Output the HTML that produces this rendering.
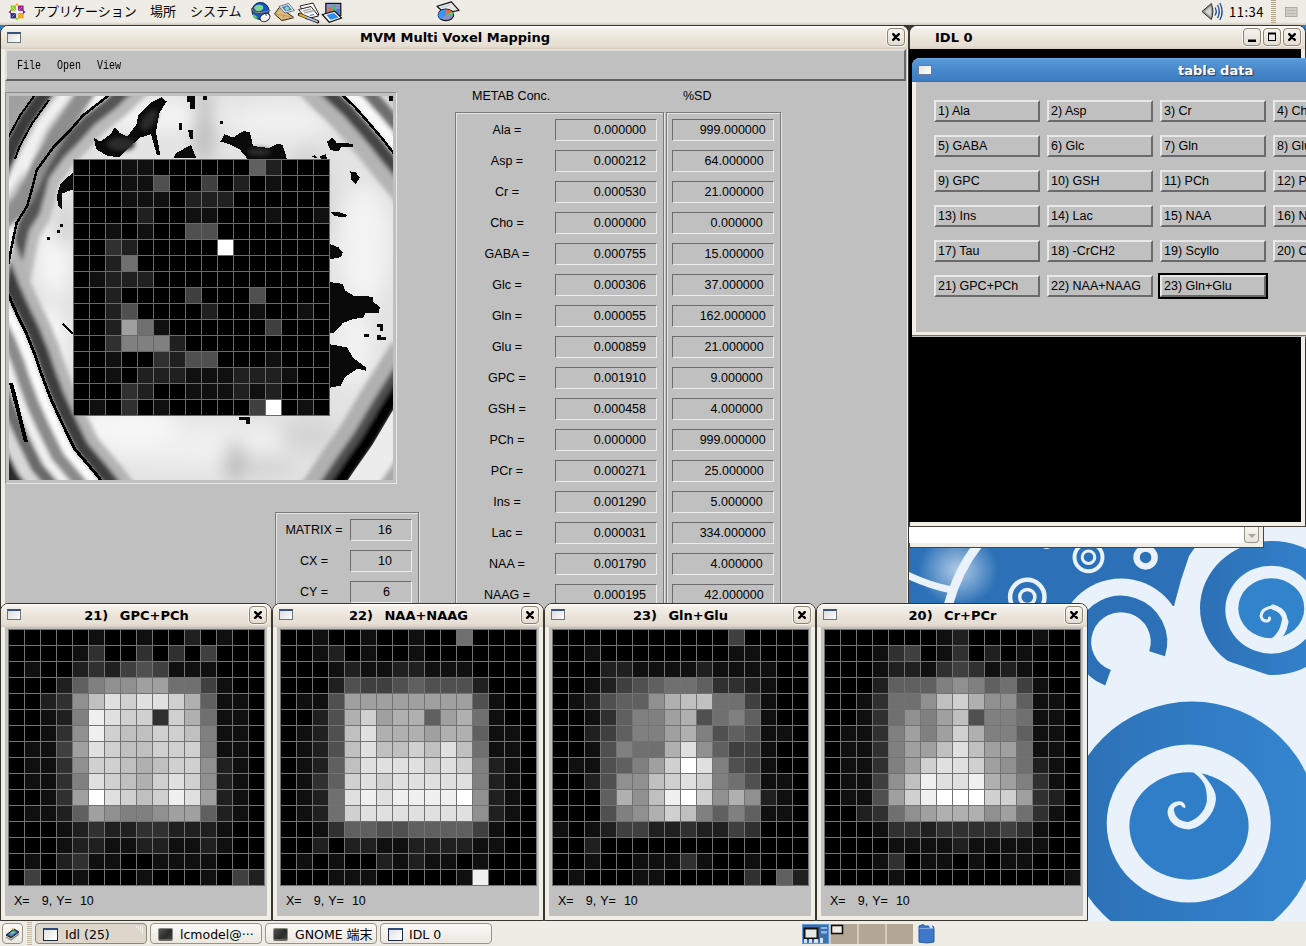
<!DOCTYPE html>
<html lang="ja"><head><meta charset="utf-8"><title>MVM Multi Voxel Mapping</title>
<style>
html,body{margin:0;padding:0;background:#2f7dc4}
body{width:1306px;height:946px;overflow:hidden}
#screen{position:relative;width:1306px;height:946px;overflow:hidden;background:#2e7cc4;font-family:"Liberation Sans","Noto Sans CJK JP",sans-serif}
.abs{position:absolute;box-sizing:border-box}
svg.abs{display:block}
.win{background:#f1eee8;border:1px solid #3a3630}
.tbar{background:linear-gradient(#ffffff 0,#f3f0ea 12%,#e9e2d8 60%,#e6dfd4 85%,#d9cfbf 100%)}
.ttl{font-family:"DejaVu Sans","Noto Sans CJK JP",sans-serif;font-weight:bold;font-size:13px;color:#000;white-space:nowrap}
.wbtn{width:18px;height:18px;border:1px solid #8d846f;border-radius:4px;background:linear-gradient(#f6f3ee,#e4ddd2);box-shadow:0 0 0 1px rgba(255,255,255,.7)}
.wbtn svg{position:absolute;left:-1px;top:-1px}
.wicon{width:14px;height:11px;border:1px solid #6f747c;border-top:2px solid #35517c;background:linear-gradient(135deg,#dcdcdc,#ffffff)}
.menu{font-family:"Liberation Mono",monospace;font-size:13px;line-height:14px;transform:scaleX(.77);transform-origin:0 0;color:#000}
.mt{font-size:12.5px;line-height:22px;color:#000;white-space:nowrap}
.lab{text-align:center}
.fld{height:22px;border:1px solid;border-color:#6c6c6c #ececec #ececec #6c6c6c;font-size:12.5px;line-height:20px}
.fld span{position:absolute;top:0;white-space:nowrap}
.etch{border:1px solid #7a7a7a;box-shadow:1px 1px 0 #e4e4e4, inset 1px 1px 0 #e4e4e4}
.mbtn{width:106px;height:22px;background:#c0c0c0;border:2px solid;border-color:#e8e8e8 #6a6a6a #6a6a6a #e8e8e8;font-size:12.5px;line-height:19px;padding-left:2px;white-space:nowrap;overflow:hidden}
.ptxt{font-family:"DejaVu Sans","Noto Sans CJK JP",sans-serif;font-size:13px;color:#000;white-space:nowrap}
.task{top:923px;width:112px;height:21px;border:1px solid #9b9485;border-radius:4px;background:linear-gradient(#fbfaf8,#ebe7df);font-family:"DejaVu Sans","Noto Sans CJK JP",sans-serif;font-size:12px;line-height:22px;white-space:nowrap;overflow:hidden}
.task{font-size:12.5px}
.task i.wi{position:absolute;left:7px;top:4px;width:15px;height:13px;box-sizing:border-box;border:1.500px solid #1d2a44;border-top:2px solid #2f4d7a;background:linear-gradient(135deg,#e2e2e2,#fff)}
.task i.ti{position:absolute;left:7px;top:4px;width:15px;height:13px;box-sizing:border-box;border:1px solid #8a8a80;border-bottom:2px solid #6a6a62;border-radius:2px;background:linear-gradient(135deg,#555 0,#2b2b2b 60%,#444 100%)}

</style></head>
<body>
<div id="screen">
<svg class="abs" style="left:909px;top:520px" width="397" height="402" viewBox="909 520 397 402">
<defs><radialGradient id="glow" cx="0.500" cy="0.500" r="0.500"><stop offset="0" stop-color="#dfeaf6" stop-opacity=".75"/><stop offset="1" stop-color="#dfeaf6" stop-opacity="0"/></radialGradient>
<linearGradient id="bl" x1="0" x2="1" y1="0" y2="0"><stop offset="0" stop-color="#2c70b6"/><stop offset="1" stop-color="#3586d0"/></linearGradient></defs>
<rect x="909" y="520" width="397" height="402" fill="#e9f1fa"/>
<path d="M909 540H1200L1189 556L1181 580L1174 606L1150 606L1088 640L909 640Z" fill="#2c71b7"/>
<ellipse cx="958" cy="570" rx="40" ry="36" fill="url(#glow)"/>
<path d="M978 545Q958 570 948 606" stroke="#e9f1fa" stroke-width="9" fill="none"/>
<path d="M905 574Q930 586 952 590" stroke="#e9f1fa" stroke-width="7" fill="none"/>
<circle cx="1046.500" cy="542" r="7" fill="#e9f1fa"/>
<circle cx="1088.500" cy="557.200" r="14" fill="none" stroke="#e9f1fa" stroke-width="4"/>
<circle cx="1088.500" cy="557.200" r="6.300" fill="none" stroke="#e9f1fa" stroke-width="3"/>
<circle cx="1145.600" cy="557.400" r="9" fill="none" stroke="#e9f1fa" stroke-width="6.500"/>
<circle cx="1027.300" cy="597" r="17.200" fill="none" stroke="#e9f1fa" stroke-width="4.500"/>
<circle cx="1027.300" cy="597" r="7.600" fill="none" stroke="#e9f1fa" stroke-width="3.500"/>
<circle cx="1121" cy="641" r="62.500" fill="#e9f1fa"/>
<path d="M1108 677.700A38 38 0 1 1 1157.100 653.700" stroke="#2c71b7" stroke-width="16.500" fill="none"/>
<ellipse cx="1272" cy="608" rx="72" ry="67" fill="url(#bl)"/>
<path d="M1196 640L1220.700 658.400L1275.800 677.700L1310 671L1310 700L1190 700Z" fill="#e9f1fa"/>
<ellipse cx="1271.300" cy="609.700" rx="46" ry="44" fill="#e9f1fa"/>
<ellipse cx="1271.300" cy="608.300" rx="33" ry="30" fill="#3183cc"/>
<g fill="none" stroke="#e9f1fa" stroke-linecap="round"><path d="M1274 641Q1283 634 1285 622" stroke-width="7"/><path d="M1285 623Q1286 611 1273 607" stroke-width="5"/><path d="M1273 607Q1262 608 1261 616Q1262 621.500 1267.500 621Q1270 620 1269.500 618" stroke-width="3"/></g>
<ellipse cx="1192" cy="826" rx="126" ry="124.500" fill="url(#bl)"/>
<ellipse cx="1188.700" cy="823.500" rx="82" ry="79" fill="#e9f1fa"/>
<ellipse cx="1189" cy="826" rx="59.600" ry="53.700" fill="#2f7ec7"/>
<path d="M1188 769L1191.600 766Q1204 773 1212 786.400Q1217 794 1215.700 801.600Q1214 812 1206.800 819.400Q1199 828 1189 829.500Q1180 829 1173.900 824.500Q1167.500 819 1167.500 811.800Q1168 806 1172.600 802.900Q1177 800.500 1181.500 801.600Q1186 804 1185.300 808L1182.700 807.200Q1181 804 1177.700 805.400Q1173.500 807 1173.900 810.500Q1174.500 815 1177.700 818.100Q1182 822 1187.800 821.900Q1194 820.500 1199.200 815.600Q1205.500 809 1206.800 801.600Q1207.500 792 1204.300 783.900Q1199 775 1188 769Z" fill="#e9f1fa"/>
</svg>
<div class="abs" style="left:900px;top:25px;width:20px;height:12px;background:#3a3630"></div>
<div class="abs win" style="left:909px;top:25px;width:397px;height:502px;border-radius:8px 8px 0 0"></div>
<div class="abs tbar" style="left:910px;top:26px;width:395px;height:23px;border-radius:7px 7px 0 0"></div>
<div class="abs ttl" style="left:935px;top:26px;height:23px;line-height:23px">IDL 0</div>
<div class="abs wbtn" style="left:1243px;top:28px"><svg width="18" height="18"><rect x="5" y="11.500" width="8" height="2.500" fill="#000"/></svg></div>
<div class="abs wbtn" style="left:1263px;top:28px"><svg width="18" height="18"><rect x="5.500" y="5.500" width="7" height="7" fill="none" stroke="#000" stroke-width="1"/><rect x="5" y="4.500" width="8" height="2" fill="#000"/></svg></div>
<div class="abs wbtn" style="left:1283px;top:28px"><svg width="18" height="18"><path d="M6.200 6.200l5.600 5.600M11.800 6.200l-5.600 5.600" stroke="#000" stroke-width="2.400" stroke-linecap="round"/></svg></div>
<div class="abs" style="left:909px;top:49px;width:392px;height:473px;background:#000"></div>
<div class="abs" style="left:909px;top:527px;width:355px;height:21px;background:#f1eee8;border:1px solid #4a453c;border-top:none"></div>
<div class="abs" style="left:909px;top:526px;width:397px;height:1px;background:#4a453c"></div>
<div class="abs" style="left:909px;top:527px;width:335px;height:16px;background:#fff"></div>
<div class="abs" style="left:1244px;top:527px;width:15px;height:16px;border:1px solid #9a9588;border-top:none;border-radius:0 0 4px 4px;background:linear-gradient(#f7f5f1,#e9e5dd)"><svg width="13" height="16" style="position:absolute;left:0;top:0"><path d="M3 7h8l-4 4z" fill="#aaa69c"/></svg></div>
<div class="abs" style="left:912px;top:58px;width:394px;height:279px;background:#c0c0c0;border-radius:8px 0 0 0"></div>
<div class="abs" style="left:912px;top:58px;width:394px;height:24px;border-radius:8px 0 0 0;background:linear-gradient(#6aa5df 0,#5596d6 12%,#4687cb 55%,#3f7ec2 90%,#3a72b0 100%)"></div>
<div class="abs" style="left:912px;top:82px;width:4px;height:254px;background:#f1eee8"></div>
<div class="abs" style="left:912px;top:332px;width:394px;height:4px;background:#f1eee8;border-bottom:1px solid #77736a"></div>
<div class="abs" style="left:918px;top:65px;width:14px;height:10px;border:1px solid #6d7d96;background:linear-gradient(135deg,#e4e4e4,#fff)"></div>
<div class="abs ttl" style="left:1178px;top:59px;height:23px;line-height:23px;color:#fff;text-shadow:1px 1px 1px #1c3a63">table data</div>
<div class="abs mbtn" style="left:934px;top:100px">1) Ala</div><div class="abs mbtn" style="left:1047px;top:100px">2) Asp</div><div class="abs mbtn" style="left:1160px;top:100px">3) Cr</div><div class="abs mbtn" style="left:1273px;top:100px">4) Cho</div><div class="abs mbtn" style="left:934px;top:135px">5) GABA</div><div class="abs mbtn" style="left:1047px;top:135px">6) Glc</div><div class="abs mbtn" style="left:1160px;top:135px">7) Gln</div><div class="abs mbtn" style="left:1273px;top:135px">8) Glu</div><div class="abs mbtn" style="left:934px;top:170px">9) GPC</div><div class="abs mbtn" style="left:1047px;top:170px">10) GSH</div><div class="abs mbtn" style="left:1160px;top:170px">11) PCh</div><div class="abs mbtn" style="left:1273px;top:170px">12) PCr</div><div class="abs mbtn" style="left:934px;top:205px">13) Ins</div><div class="abs mbtn" style="left:1047px;top:205px">14) Lac</div><div class="abs mbtn" style="left:1160px;top:205px">15) NAA</div><div class="abs mbtn" style="left:1273px;top:205px">16) NAAG</div><div class="abs mbtn" style="left:934px;top:240px">17) Tau</div><div class="abs mbtn" style="left:1047px;top:240px">18) -CrCH2</div><div class="abs mbtn" style="left:1160px;top:240px">19) Scyllo</div><div class="abs mbtn" style="left:1273px;top:240px">20) Cr+PCr</div><div class="abs mbtn" style="left:934px;top:275px">21) GPC+PCh</div><div class="abs mbtn" style="left:1047px;top:275px">22) NAA+NAAG</div><div class="abs" style="left:1158px;top:273px;width:110px;height:26px;background:#000"></div><div class="abs mbtn" style="left:1160px;top:275px">23) Gln+Glu</div>
<div class="abs win" style="left:0;top:25px;width:909px;height:620px;border-radius:8px 8px 0 0"></div>
<div class="abs tbar" style="left:1px;top:26px;width:907px;height:23px;border-radius:7px 7px 0 0"></div>
<div class="abs wicon" style="left:7px;top:32px"></div>
<div class="abs ttl" style="left:360px;top:26px;height:23px;line-height:23px">MVM Multi Voxel Mapping</div>
<div class="abs wbtn" style="left:887px;top:28px"><svg width="18" height="18"><path d="M6.200 6.200l5.600 5.600M11.800 6.200l-5.600 5.600" stroke="#000" stroke-width="2.400" stroke-linecap="round"/></svg></div>
<div class="abs" style="left:5px;top:49px;width:902px;height:596px;background:#c0c0c0"></div>
<div class="abs" style="left:5px;top:49px;width:901px;height:32px;background:#c0c0c0;border:2px solid;border-color:#dedede #6a6a6a #606060 #dedede"></div>
<div class="abs menu" style="left:17px;top:59px">File</div>
<div class="abs menu" style="left:57px;top:59px">Open</div>
<div class="abs menu" style="left:97px;top:59px">View</div>
<div class="abs" style="left:5px;top:92px;width:392px;height:392px;border:1px solid;border-color:#8a8a8a #e6e6e6 #e6e6e6 #8a8a8a"></div>
<svg class="abs" style="left:9px;top:96px" width="384" height="384" viewBox="0 0 384 384">
<defs><filter id="b2" x="-20%" y="-20%" width="140%" height="140%"><feGaussianBlur stdDeviation="2.2"/></filter><filter id="b5" x="-20%" y="-20%" width="140%" height="140%"><feGaussianBlur stdDeviation="5"/></filter><filter id="b9" x="-30%" y="-30%" width="160%" height="160%"><feGaussianBlur stdDeviation="9"/></filter></defs>
<rect width="384" height="384" fill="#e3e3e3"/>
<g filter="url(#b9)">
<ellipse cx="150" cy="20" rx="70" ry="14" fill="#f4f4f4"/>
<ellipse cx="270" cy="25" rx="50" ry="18" fill="#f0f0f0"/>
<ellipse cx="300" cy="110" rx="22" ry="60" fill="#d2d2d2"/>
<ellipse cx="355" cy="150" rx="25" ry="60" fill="#f3f3f3"/>
<ellipse cx="45" cy="160" rx="16" ry="40" fill="#f6f6f6"/>
<ellipse cx="40" cy="250" rx="14" ry="40" fill="#fafafa"/>
<ellipse cx="200" cy="350" rx="120" ry="22" fill="#efefef"/>
<ellipse cx="120" cy="330" rx="50" ry="20" fill="#f6f6f6"/>
<ellipse cx="300" cy="340" rx="30" ry="20" fill="#d6d6d6"/>
<ellipse cx="345" cy="250" rx="18" ry="40" fill="#f2f2f2"/>
<ellipse cx="250" cy="370" rx="40" ry="12" fill="#d4d4d4"/>
<ellipse cx="195" cy="30" rx="7" ry="40" fill="#a8a8a8"/>
<ellipse cx="226" cy="365" rx="5" ry="22" fill="#9a9a9a"/>
<ellipse cx="55" cy="130" rx="10" ry="20" fill="#cfcfcf"/>
</g>
<polygon points="-50,-50 140,-40 96.4,2 74.2,19.3 59.4,36.2 44.6,51 27.7,74.2 23.5,91 18.2,110 7.6,127 2.3,152 -2,175 -8,215 -20,150 -2,196 8.7,219.7 17,236.6 25.6,257.8 32,276.8 41.5,302 51,323 65.8,353 87,378 120,420 -50,420" fill="#c4c4c4"/>
<g filter="url(#b2)" fill="none" stroke-linejoin="round">
<path d="M151 -31 L107.4 11 L85.2 28.3 L70.4 45.2 L55.6 60 L38.7 83.2 L34.5 100 L29.2 119 L18.6 136 L13.3 161 L9 184 L3 224" stroke="#bababa" stroke-width="25"/>
<path d="M146 -35 L102.4 7 L80.2 24.3 L65.4 41.2 L50.6 56 L33.7 79.2 L29.5 96 L24.2 115 L13.6 132 L8.3 157 L4 180 L-2 220" stroke="#555555" stroke-width="14"/>
<path d="M-7 146 L11 192 L21.7 215.7 L30 232.6 L38.6 253.8 L45 272.8 L54.5 298 L64 319 L78.8 349 L100 374 L133 416" stroke="#b4b4b4" stroke-width="24"/>
<path d="M-13 148 L5 194 L15.7 217.7 L24 234.6 L32.6 255.8 L39 274.8 L48.5 300 L58 321 L72.8 351 L94 376 L127 418" stroke="#3c3c3c" stroke-width="14"/>
<path d="M135 -44 L91.4 -2 L69.2 15.3 L54.4 32.2 L39.6 47 L22.7 70.2 L18.5 87 L13.2 106 L2.6 123 L-2.7 148 L-7 171 L-13 211" stroke="#fbfbfb" stroke-width="12"/>
<path d="M92 -24 L74 2 L49 38 L32 66 L15 102 L2 118 L-10 130" stroke="#8e8e8e" stroke-width="17"/>
<path d="M72 -24 L55 0 L34 27.7 L17 59 L4.5 80.5 L-6 98" stroke="#f0f0f0" stroke-width="11"/>
<path d="M35 -35.5 L18 -12 L1 11.5 L-11.5 34.7 L-16 47 L-24 68" stroke="#a0a0a0" stroke-width="22"/>
<path d="M51 -23.5 L34 0 L17 23.5 L4.5 46.7 L0 59 L-8 80" stroke="#3a3a3a" stroke-width="14"/>
<path d="M-26 153 L-8 199 L2.7 222.7 L11 239.6 L19.6 260.8 L26 279.8 L35.5 305 L45 326 L59.8 356 L81 381 L114 423" stroke="#fcfcfc" stroke-width="10"/>
<path d="M-37 158 L-19 204 L-8.3 227.7 L0 244.6 L8.6 265.8 L15 284.8 L24.5 310 L34 331 L48.8 361 L70 386 L103 428" stroke="#8a8a8a" stroke-width="13"/>
<path d="M-47 163 L-29 209 L-18.3 232.7 L-10 249.6 L-1.4 270.8 L5 289.8 L14.5 315 L24 336 L38.8 366 L60 391 L93 433" stroke="#f0f0f0" stroke-width="9"/>
<path d="M-58 168 L-40 214 L-29.3 237.7 L-21 254.6 L-12.4 275.8 L-6 294.8 L3.5 320 L13 341 L27.8 371 L49 396 L82 438" stroke="#6a6a6a" stroke-width="12"/>
<path d="M-70 174 L-52 220 L-41.3 243.7 L-33 260.6 L-24.4 281.8 L-18 300.8 L-8.5 326 L1 347 L15.8 377 L37 402 L70 444" stroke="#d8d8d8" stroke-width="12"/>
<path d="M-84 180 L-66 226 L-55.3 249.7 L-47 266.6 L-38.4 287.8 L-32 306.8 L-22.5 332 L-13 353 L1.8 383 L23 408 L56 450" stroke="#2a2a2a" stroke-width="18"/>
</g>
<polygon points="295,-40 330,-4 345,10 360,27 372,41 384.6,57 420,100 420,-40" fill="#e6e6e6"/>
<g filter="url(#b2)" fill="none">
<path d="M282 -29 L317 7 L332 21 L347 38 L359 52 L371.6 68 L407 111" stroke="#b4b4b4" stroke-width="26"/>
<path d="M289 -35 L324 1 L339 15 L354 32 L366 46 L378.6 62 L414 105" stroke="#444444" stroke-width="13"/>
<path d="M300 -44 L335 -8 L350 6 L365 23 L377 37 L389.6 53 L425 96" stroke="#fafafa" stroke-width="9"/>
<path d="M310 -53 L345 -17 L360 -3 L375 14 L387 28 L399.6 44 L435 87" stroke="#6e6e6e" stroke-width="13"/>
<path d="M322 -64 L357 -28 L372 -14 L387 3 L399 17 L411.6 33 L447 76" stroke="#c8c8c8" stroke-width="12"/>
</g>
<polygon points="415,265 383.6,314.8 363.5,348.7 344.4,376 315,420 420,420" fill="#ececec"/>
<g filter="url(#b2)" fill="none">
<path d="M394 253 L362.6 302.8 L342.5 336.7 L323.4 364 L294 408" stroke="#b0b0b0" stroke-width="26"/>
<path d="M403 258 L371.6 307.8 L351.5 341.7 L332.4 369 L303 413" stroke="#505050" stroke-width="16"/>
<path d="M410 262 L378.6 311.8 L358.5 345.7 L339.4 373 L310 417" stroke="#000000" stroke-width="14"/>
</g>
<polygon points="415,265 383.6,314.8 363.5,348.7 344.4,376 315,420 420,420" fill="#ececec"/>
<path d="M445 283 L413.6 332.8 L393.5 366.7 L374.4 394 L345 438" stroke="#a8a8a8" stroke-width="14" fill="none" filter="url(#b2)"/>
<g fill="none" stroke="#000" shape-rendering="crispEdges">
<path d="M140 -40 L96.4 2 L74.2 19.3 L59.4 36.2 L44.6 51 L27.7 74.2 L23.5 91 L18.2 110 L7.6 127 L2.3 152 L-2 175 L-8 215" stroke-width="2.500"/>
<path d="M-20 150 L-2 196 L8.7 219.7 L17 236.6 L25.6 257.8 L32 276.8 L41.5 302 L51 323 L65.8 353 L87 378 L120 420" stroke-width="3"/>
<path d="M295 -40 L330 -4 L345 10 L360 27 L372 41 L384.6 57 L420 100" stroke-width="2.500"/>
<path d="M28 -4 L11 19.5 L-1.5 42.7 L-6 55" stroke-width="2"/>
<path d="M40 4 L23 27.5 L10.5 50.7 L6 63" stroke-width="2"/>
<path d="M2 287 L8 310 L17 346" stroke-width="4"/>
<path d="M54 228 L63.6 237.7" stroke-width="2.500"/>
</g>
<g fill="#0a0a0a" shape-rendering="crispEdges">
<polygon points="84.8,41.5 91,45.7 101.7,38.3 106,30.9 111,37.2 118.6,40.4 128,27.7 129,19.3 142,6.6 152.4,1.3 157.7,5.5 150.3,17 147,36 151.4,59.4 148,59.4 142,38.3 131.3,41.5 122.8,48.9 110,61.5 97.5,59.4 87,53"/>
<polygon points="167,57 182,49 187,61.5 165,61.5"/>
<polygon points="178,0 186,0 186,13 181,13 181,6 178,6"/>
<polygon points="170,27 173,27 173,34 170,34"/>
<polygon points="179,34 184,34 184,43 181,43"/>
<polygon points="63.6,77.4 65,77 65,93 53,97.5 53,114 49,110 48,99.6 51,89 59.4,80.5"/>
<polygon points="51,128 54,128 54,131 51,131"/>
<polygon points="48,134 51,134 51,137 48,137"/>
<polygon points="38,141 41,141 41,144 38,144"/>
<polygon points="211.3,45.7 215.5,38.3 224,41.5 234.5,35 240.9,36.2 244,50 260,52 268.3,47.8 273.6,48.9 277.9,63 238.7,63 230.3,53 219.7,47.8"/>
<polygon points="318,45.7 323.3,41.5 327.5,46.7 344.4,47.8 344.4,50.5 331.8,51.4 329.6,55.2 321.2,54.1"/>
<polygon points="302,61 306,59 308,62"/>
<polygon points="311,60 317,58 318,63 312,63"/>
<polygon points="341.3,75.3 346.6,76.3 350.8,81.6 346.6,88 342.3,83.7"/>
<polygon points="321.2,115.5 331,116.5 338,119 336,121.5 325,120"/>
<polygon points="321.2,148.2 329.6,151.4 333.9,156.7 331.8,161 323.3,163 321,163"/>
<polygon points="211,25 214,25 214,28 211,28"/>
<polygon points="194,0 198,0 198,4 194,4"/>
<polygon points="321.2,186 333.9,188 336,194.3 344.4,199.6 363.5,200.7 363.5,205 370.9,211.3 369.8,216.5 357,216.5 354,221.8 344.4,222.9 333.9,227 325.4,236.6 321.2,236.6"/>
<polygon points="367.7,228 374,228 374,234.5 371,234.5 371,231 367.7,231"/>
<polygon points="355,237.7 360,237.7 360,241 355,241"/>
<polygon points="367.7,238.7 372,238.7 372,241 377,241 377,244 367.7,244"/>
<polygon points="321.2,248.3 338,251.4 344.4,262 357,271.5 357,274.7 348.7,272.6 336,281 331.8,289.5 321.2,291.6"/>
<polygon points="230.3,321.2 240.9,321.2 240.9,327.5 237,327.5 237,324 230.3,324"/>
<polygon points="380,0 384,0 384,5 380,5"/>
</g>
<g fill="#2c2c2c" filter="url(#b2)"><ellipse cx="112" cy="48" rx="14" ry="7"/><ellipse cx="140" cy="24" rx="6" ry="12" transform="rotate(35 140 24)"/><ellipse cx="250" cy="56" rx="12" ry="4"/></g>
</svg><svg class="abs " style="left:73px;top:159px" width="257" height="257" viewBox="0 0 257 257" shape-rendering="crispEdges"><rect width="257" height="257" fill="#6a6a6a"/><rect x="1" y="1" width="15" height="15" fill="#000000"/><rect x="17" y="1" width="15" height="15" fill="#000000"/><rect x="33" y="1" width="15" height="15" fill="#000000"/><rect x="49" y="1" width="15" height="15" fill="#101010"/><rect x="65" y="1" width="15" height="15" fill="#101010"/><rect x="81" y="1" width="15" height="15" fill="#000000"/><rect x="97" y="1" width="15" height="15" fill="#000000"/><rect x="113" y="1" width="15" height="15" fill="#000000"/><rect x="129" y="1" width="15" height="15" fill="#000000"/><rect x="145" y="1" width="15" height="15" fill="#000000"/><rect x="161" y="1" width="15" height="15" fill="#000000"/><rect x="177" y="1" width="15" height="15" fill="#606060"/><rect x="193" y="1" width="15" height="15" fill="#202020"/><rect x="209" y="1" width="15" height="15" fill="#000000"/><rect x="225" y="1" width="15" height="15" fill="#000000"/><rect x="241" y="1" width="15" height="15" fill="#000000"/><rect x="1" y="17" width="15" height="15" fill="#000000"/><rect x="17" y="17" width="15" height="15" fill="#000000"/><rect x="33" y="17" width="15" height="15" fill="#000000"/><rect x="49" y="17" width="15" height="15" fill="#101010"/><rect x="65" y="17" width="15" height="15" fill="#101010"/><rect x="81" y="17" width="15" height="15" fill="#505050"/><rect x="97" y="17" width="15" height="15" fill="#000000"/><rect x="113" y="17" width="15" height="15" fill="#000000"/><rect x="129" y="17" width="15" height="15" fill="#404040"/><rect x="145" y="17" width="15" height="15" fill="#000000"/><rect x="161" y="17" width="15" height="15" fill="#202020"/><rect x="177" y="17" width="15" height="15" fill="#000000"/><rect x="193" y="17" width="15" height="15" fill="#101010"/><rect x="209" y="17" width="15" height="15" fill="#000000"/><rect x="225" y="17" width="15" height="15" fill="#000000"/><rect x="241" y="17" width="15" height="15" fill="#000000"/><rect x="1" y="33" width="15" height="15" fill="#000000"/><rect x="17" y="33" width="15" height="15" fill="#000000"/><rect x="33" y="33" width="15" height="15" fill="#000000"/><rect x="49" y="33" width="15" height="15" fill="#101010"/><rect x="65" y="33" width="15" height="15" fill="#101010"/><rect x="81" y="33" width="15" height="15" fill="#101010"/><rect x="97" y="33" width="15" height="15" fill="#000000"/><rect x="113" y="33" width="15" height="15" fill="#202020"/><rect x="129" y="33" width="15" height="15" fill="#202020"/><rect x="145" y="33" width="15" height="15" fill="#202020"/><rect x="161" y="33" width="15" height="15" fill="#000000"/><rect x="177" y="33" width="15" height="15" fill="#000000"/><rect x="193" y="33" width="15" height="15" fill="#000000"/><rect x="209" y="33" width="15" height="15" fill="#000000"/><rect x="225" y="33" width="15" height="15" fill="#000000"/><rect x="241" y="33" width="15" height="15" fill="#000000"/><rect x="1" y="49" width="15" height="15" fill="#000000"/><rect x="17" y="49" width="15" height="15" fill="#000000"/><rect x="33" y="49" width="15" height="15" fill="#000000"/><rect x="49" y="49" width="15" height="15" fill="#000000"/><rect x="65" y="49" width="15" height="15" fill="#202020"/><rect x="81" y="49" width="15" height="15" fill="#000000"/><rect x="97" y="49" width="15" height="15" fill="#000000"/><rect x="113" y="49" width="15" height="15" fill="#101010"/><rect x="129" y="49" width="15" height="15" fill="#101010"/><rect x="145" y="49" width="15" height="15" fill="#000000"/><rect x="161" y="49" width="15" height="15" fill="#000000"/><rect x="177" y="49" width="15" height="15" fill="#000000"/><rect x="193" y="49" width="15" height="15" fill="#101010"/><rect x="209" y="49" width="15" height="15" fill="#000000"/><rect x="225" y="49" width="15" height="15" fill="#000000"/><rect x="241" y="49" width="15" height="15" fill="#101010"/><rect x="1" y="65" width="15" height="15" fill="#000000"/><rect x="17" y="65" width="15" height="15" fill="#000000"/><rect x="33" y="65" width="15" height="15" fill="#101010"/><rect x="49" y="65" width="15" height="15" fill="#000000"/><rect x="65" y="65" width="15" height="15" fill="#101010"/><rect x="81" y="65" width="15" height="15" fill="#000000"/><rect x="97" y="65" width="15" height="15" fill="#000000"/><rect x="113" y="65" width="15" height="15" fill="#505050"/><rect x="129" y="65" width="15" height="15" fill="#505050"/><rect x="145" y="65" width="15" height="15" fill="#000000"/><rect x="161" y="65" width="15" height="15" fill="#000000"/><rect x="177" y="65" width="15" height="15" fill="#000000"/><rect x="193" y="65" width="15" height="15" fill="#000000"/><rect x="209" y="65" width="15" height="15" fill="#000000"/><rect x="225" y="65" width="15" height="15" fill="#000000"/><rect x="241" y="65" width="15" height="15" fill="#000000"/><rect x="1" y="81" width="15" height="15" fill="#000000"/><rect x="17" y="81" width="15" height="15" fill="#000000"/><rect x="33" y="81" width="15" height="15" fill="#303030"/><rect x="49" y="81" width="15" height="15" fill="#202020"/><rect x="65" y="81" width="15" height="15" fill="#000000"/><rect x="81" y="81" width="15" height="15" fill="#000000"/><rect x="97" y="81" width="15" height="15" fill="#000000"/><rect x="113" y="81" width="15" height="15" fill="#000000"/><rect x="129" y="81" width="15" height="15" fill="#000000"/><rect x="145" y="81" width="15" height="15" fill="#ffffff"/><rect x="161" y="81" width="15" height="15" fill="#000000"/><rect x="177" y="81" width="15" height="15" fill="#000000"/><rect x="193" y="81" width="15" height="15" fill="#000000"/><rect x="209" y="81" width="15" height="15" fill="#000000"/><rect x="225" y="81" width="15" height="15" fill="#000000"/><rect x="241" y="81" width="15" height="15" fill="#000000"/><rect x="1" y="97" width="15" height="15" fill="#000000"/><rect x="17" y="97" width="15" height="15" fill="#000000"/><rect x="33" y="97" width="15" height="15" fill="#202020"/><rect x="49" y="97" width="15" height="15" fill="#707070"/><rect x="65" y="97" width="15" height="15" fill="#000000"/><rect x="81" y="97" width="15" height="15" fill="#000000"/><rect x="97" y="97" width="15" height="15" fill="#000000"/><rect x="113" y="97" width="15" height="15" fill="#000000"/><rect x="129" y="97" width="15" height="15" fill="#000000"/><rect x="145" y="97" width="15" height="15" fill="#000000"/><rect x="161" y="97" width="15" height="15" fill="#000000"/><rect x="177" y="97" width="15" height="15" fill="#000000"/><rect x="193" y="97" width="15" height="15" fill="#000000"/><rect x="209" y="97" width="15" height="15" fill="#000000"/><rect x="225" y="97" width="15" height="15" fill="#000000"/><rect x="241" y="97" width="15" height="15" fill="#000000"/><rect x="1" y="113" width="15" height="15" fill="#000000"/><rect x="17" y="113" width="15" height="15" fill="#101010"/><rect x="33" y="113" width="15" height="15" fill="#202020"/><rect x="49" y="113" width="15" height="15" fill="#202020"/><rect x="65" y="113" width="15" height="15" fill="#202020"/><rect x="81" y="113" width="15" height="15" fill="#000000"/><rect x="97" y="113" width="15" height="15" fill="#000000"/><rect x="113" y="113" width="15" height="15" fill="#000000"/><rect x="129" y="113" width="15" height="15" fill="#000000"/><rect x="145" y="113" width="15" height="15" fill="#000000"/><rect x="161" y="113" width="15" height="15" fill="#000000"/><rect x="177" y="113" width="15" height="15" fill="#000000"/><rect x="193" y="113" width="15" height="15" fill="#000000"/><rect x="209" y="113" width="15" height="15" fill="#000000"/><rect x="225" y="113" width="15" height="15" fill="#000000"/><rect x="241" y="113" width="15" height="15" fill="#000000"/><rect x="1" y="129" width="15" height="15" fill="#000000"/><rect x="17" y="129" width="15" height="15" fill="#000000"/><rect x="33" y="129" width="15" height="15" fill="#202020"/><rect x="49" y="129" width="15" height="15" fill="#000000"/><rect x="65" y="129" width="15" height="15" fill="#000000"/><rect x="81" y="129" width="15" height="15" fill="#000000"/><rect x="97" y="129" width="15" height="15" fill="#000000"/><rect x="113" y="129" width="15" height="15" fill="#404040"/><rect x="129" y="129" width="15" height="15" fill="#000000"/><rect x="145" y="129" width="15" height="15" fill="#000000"/><rect x="161" y="129" width="15" height="15" fill="#000000"/><rect x="177" y="129" width="15" height="15" fill="#505050"/><rect x="193" y="129" width="15" height="15" fill="#000000"/><rect x="209" y="129" width="15" height="15" fill="#000000"/><rect x="225" y="129" width="15" height="15" fill="#000000"/><rect x="241" y="129" width="15" height="15" fill="#000000"/><rect x="1" y="145" width="15" height="15" fill="#000000"/><rect x="17" y="145" width="15" height="15" fill="#000000"/><rect x="33" y="145" width="15" height="15" fill="#202020"/><rect x="49" y="145" width="15" height="15" fill="#505050"/><rect x="65" y="145" width="15" height="15" fill="#000000"/><rect x="81" y="145" width="15" height="15" fill="#000000"/><rect x="97" y="145" width="15" height="15" fill="#000000"/><rect x="113" y="145" width="15" height="15" fill="#000000"/><rect x="129" y="145" width="15" height="15" fill="#202020"/><rect x="145" y="145" width="15" height="15" fill="#000000"/><rect x="161" y="145" width="15" height="15" fill="#000000"/><rect x="177" y="145" width="15" height="15" fill="#101010"/><rect x="193" y="145" width="15" height="15" fill="#000000"/><rect x="209" y="145" width="15" height="15" fill="#000000"/><rect x="225" y="145" width="15" height="15" fill="#101010"/><rect x="241" y="145" width="15" height="15" fill="#000000"/><rect x="1" y="161" width="15" height="15" fill="#000000"/><rect x="17" y="161" width="15" height="15" fill="#000000"/><rect x="33" y="161" width="15" height="15" fill="#202020"/><rect x="49" y="161" width="15" height="15" fill="#a0a0a0"/><rect x="65" y="161" width="15" height="15" fill="#707070"/><rect x="81" y="161" width="15" height="15" fill="#101010"/><rect x="97" y="161" width="15" height="15" fill="#000000"/><rect x="113" y="161" width="15" height="15" fill="#000000"/><rect x="129" y="161" width="15" height="15" fill="#000000"/><rect x="145" y="161" width="15" height="15" fill="#000000"/><rect x="161" y="161" width="15" height="15" fill="#000000"/><rect x="177" y="161" width="15" height="15" fill="#000000"/><rect x="193" y="161" width="15" height="15" fill="#404040"/><rect x="209" y="161" width="15" height="15" fill="#000000"/><rect x="225" y="161" width="15" height="15" fill="#000000"/><rect x="241" y="161" width="15" height="15" fill="#000000"/><rect x="1" y="177" width="15" height="15" fill="#000000"/><rect x="17" y="177" width="15" height="15" fill="#000000"/><rect x="33" y="177" width="15" height="15" fill="#303030"/><rect x="49" y="177" width="15" height="15" fill="#808080"/><rect x="65" y="177" width="15" height="15" fill="#808080"/><rect x="81" y="177" width="15" height="15" fill="#808080"/><rect x="97" y="177" width="15" height="15" fill="#202020"/><rect x="113" y="177" width="15" height="15" fill="#000000"/><rect x="129" y="177" width="15" height="15" fill="#000000"/><rect x="145" y="177" width="15" height="15" fill="#000000"/><rect x="161" y="177" width="15" height="15" fill="#000000"/><rect x="177" y="177" width="15" height="15" fill="#000000"/><rect x="193" y="177" width="15" height="15" fill="#000000"/><rect x="209" y="177" width="15" height="15" fill="#000000"/><rect x="225" y="177" width="15" height="15" fill="#000000"/><rect x="241" y="177" width="15" height="15" fill="#000000"/><rect x="1" y="193" width="15" height="15" fill="#000000"/><rect x="17" y="193" width="15" height="15" fill="#000000"/><rect x="33" y="193" width="15" height="15" fill="#101010"/><rect x="49" y="193" width="15" height="15" fill="#000000"/><rect x="65" y="193" width="15" height="15" fill="#000000"/><rect x="81" y="193" width="15" height="15" fill="#303030"/><rect x="97" y="193" width="15" height="15" fill="#202020"/><rect x="113" y="193" width="15" height="15" fill="#505050"/><rect x="129" y="193" width="15" height="15" fill="#505050"/><rect x="145" y="193" width="15" height="15" fill="#000000"/><rect x="161" y="193" width="15" height="15" fill="#000000"/><rect x="177" y="193" width="15" height="15" fill="#000000"/><rect x="193" y="193" width="15" height="15" fill="#101010"/><rect x="209" y="193" width="15" height="15" fill="#000000"/><rect x="225" y="193" width="15" height="15" fill="#000000"/><rect x="241" y="193" width="15" height="15" fill="#000000"/><rect x="1" y="209" width="15" height="15" fill="#000000"/><rect x="17" y="209" width="15" height="15" fill="#000000"/><rect x="33" y="209" width="15" height="15" fill="#101010"/><rect x="49" y="209" width="15" height="15" fill="#000000"/><rect x="65" y="209" width="15" height="15" fill="#202020"/><rect x="81" y="209" width="15" height="15" fill="#202020"/><rect x="97" y="209" width="15" height="15" fill="#202020"/><rect x="113" y="209" width="15" height="15" fill="#101010"/><rect x="129" y="209" width="15" height="15" fill="#101010"/><rect x="145" y="209" width="15" height="15" fill="#101010"/><rect x="161" y="209" width="15" height="15" fill="#202020"/><rect x="177" y="209" width="15" height="15" fill="#202020"/><rect x="193" y="209" width="15" height="15" fill="#202020"/><rect x="209" y="209" width="15" height="15" fill="#101010"/><rect x="225" y="209" width="15" height="15" fill="#000000"/><rect x="241" y="209" width="15" height="15" fill="#000000"/><rect x="1" y="225" width="15" height="15" fill="#000000"/><rect x="17" y="225" width="15" height="15" fill="#000000"/><rect x="33" y="225" width="15" height="15" fill="#000000"/><rect x="49" y="225" width="15" height="15" fill="#303030"/><rect x="65" y="225" width="15" height="15" fill="#202020"/><rect x="81" y="225" width="15" height="15" fill="#000000"/><rect x="97" y="225" width="15" height="15" fill="#000000"/><rect x="113" y="225" width="15" height="15" fill="#101010"/><rect x="129" y="225" width="15" height="15" fill="#101010"/><rect x="145" y="225" width="15" height="15" fill="#101010"/><rect x="161" y="225" width="15" height="15" fill="#202020"/><rect x="177" y="225" width="15" height="15" fill="#101010"/><rect x="193" y="225" width="15" height="15" fill="#202020"/><rect x="209" y="225" width="15" height="15" fill="#000000"/><rect x="225" y="225" width="15" height="15" fill="#000000"/><rect x="241" y="225" width="15" height="15" fill="#000000"/><rect x="1" y="241" width="15" height="15" fill="#000000"/><rect x="17" y="241" width="15" height="15" fill="#101010"/><rect x="33" y="241" width="15" height="15" fill="#000000"/><rect x="49" y="241" width="15" height="15" fill="#303030"/><rect x="65" y="241" width="15" height="15" fill="#000000"/><rect x="81" y="241" width="15" height="15" fill="#101010"/><rect x="97" y="241" width="15" height="15" fill="#000000"/><rect x="113" y="241" width="15" height="15" fill="#000000"/><rect x="129" y="241" width="15" height="15" fill="#000000"/><rect x="145" y="241" width="15" height="15" fill="#000000"/><rect x="161" y="241" width="15" height="15" fill="#000000"/><rect x="177" y="241" width="15" height="15" fill="#404040"/><rect x="193" y="241" width="15" height="15" fill="#ffffff"/><rect x="209" y="241" width="15" height="15" fill="#000000"/><rect x="225" y="241" width="15" height="15" fill="#101010"/><rect x="241" y="241" width="15" height="15" fill="#000000"/></svg>
<div class="abs mt" style="left:472px;top:85px">METAB Conc.</div><div class="abs mt" style="left:683px;top:85px">%SD</div>
<div class="abs etch" style="left:455px;top:112px;width:209px;height:500px"></div>
<div class="abs etch" style="left:666px;top:112px;width:115px;height:500px"></div>
<div class="abs mt lab" style="left:457px;top:119px;width:100px">Ala =</div><div class="abs fld" style="left:555px;top:119px;width:102px"><span style="right:10px">0.000000</span></div><div class="abs fld" style="left:672px;top:119px;width:102px"><span style="right:7.3px">999.000000</span></div>
<div class="abs mt lab" style="left:457px;top:150px;width:100px">Asp =</div><div class="abs fld" style="left:555px;top:150px;width:102px"><span style="right:10px">0.000212</span></div><div class="abs fld" style="left:672px;top:150px;width:102px"><span style="right:9.3px">64.000000</span></div>
<div class="abs mt lab" style="left:457px;top:181px;width:100px">Cr =</div><div class="abs fld" style="left:555px;top:181px;width:102px"><span style="right:10px">0.000530</span></div><div class="abs fld" style="left:672px;top:181px;width:102px"><span style="right:9.3px">21.000000</span></div>
<div class="abs mt lab" style="left:457px;top:212px;width:100px">Cho =</div><div class="abs fld" style="left:555px;top:212px;width:102px"><span style="right:10px">0.000000</span></div><div class="abs fld" style="left:672px;top:212px;width:102px"><span style="right:10.3px">0.000000</span></div>
<div class="abs mt lab" style="left:457px;top:243px;width:100px">GABA =</div><div class="abs fld" style="left:555px;top:243px;width:102px"><span style="right:10px">0.000755</span></div><div class="abs fld" style="left:672px;top:243px;width:102px"><span style="right:9.3px">15.000000</span></div>
<div class="abs mt lab" style="left:457px;top:274px;width:100px">Glc =</div><div class="abs fld" style="left:555px;top:274px;width:102px"><span style="right:10px">0.000306</span></div><div class="abs fld" style="left:672px;top:274px;width:102px"><span style="right:9.3px">37.000000</span></div>
<div class="abs mt lab" style="left:457px;top:305px;width:100px">Gln =</div><div class="abs fld" style="left:555px;top:305px;width:102px"><span style="right:10px">0.000055</span></div><div class="abs fld" style="left:672px;top:305px;width:102px"><span style="right:7.3px">162.000000</span></div>
<div class="abs mt lab" style="left:457px;top:336px;width:100px">Glu =</div><div class="abs fld" style="left:555px;top:336px;width:102px"><span style="right:10px">0.000859</span></div><div class="abs fld" style="left:672px;top:336px;width:102px"><span style="right:9.3px">21.000000</span></div>
<div class="abs mt lab" style="left:457px;top:367px;width:100px">GPC =</div><div class="abs fld" style="left:555px;top:367px;width:102px"><span style="right:10px">0.001910</span></div><div class="abs fld" style="left:672px;top:367px;width:102px"><span style="right:10.3px">9.000000</span></div>
<div class="abs mt lab" style="left:457px;top:398px;width:100px">GSH =</div><div class="abs fld" style="left:555px;top:398px;width:102px"><span style="right:10px">0.000458</span></div><div class="abs fld" style="left:672px;top:398px;width:102px"><span style="right:10.3px">4.000000</span></div>
<div class="abs mt lab" style="left:457px;top:429px;width:100px">PCh =</div><div class="abs fld" style="left:555px;top:429px;width:102px"><span style="right:10px">0.000000</span></div><div class="abs fld" style="left:672px;top:429px;width:102px"><span style="right:7.3px">999.000000</span></div>
<div class="abs mt lab" style="left:457px;top:460px;width:100px">PCr =</div><div class="abs fld" style="left:555px;top:460px;width:102px"><span style="right:10px">0.000271</span></div><div class="abs fld" style="left:672px;top:460px;width:102px"><span style="right:9.3px">25.000000</span></div>
<div class="abs mt lab" style="left:457px;top:491px;width:100px">Ins =</div><div class="abs fld" style="left:555px;top:491px;width:102px"><span style="right:10px">0.001290</span></div><div class="abs fld" style="left:672px;top:491px;width:102px"><span style="right:10.3px">5.000000</span></div>
<div class="abs mt lab" style="left:457px;top:522px;width:100px">Lac =</div><div class="abs fld" style="left:555px;top:522px;width:102px"><span style="right:10px">0.000031</span></div><div class="abs fld" style="left:672px;top:522px;width:102px"><span style="right:7.3px">334.000000</span></div>
<div class="abs mt lab" style="left:457px;top:553px;width:100px">NAA =</div><div class="abs fld" style="left:555px;top:553px;width:102px"><span style="right:10px">0.001790</span></div><div class="abs fld" style="left:672px;top:553px;width:102px"><span style="right:10.3px">4.000000</span></div>
<div class="abs mt lab" style="left:457px;top:584px;width:100px">NAAG =</div><div class="abs fld" style="left:555px;top:584px;width:102px"><span style="right:10px">0.000195</span></div><div class="abs fld" style="left:672px;top:584px;width:102px"><span style="right:9.3px">42.000000</span></div>
<div class="abs etch" style="left:275px;top:512px;width:144px;height:100px"></div>
<div class="abs mt lab" style="left:277px;top:519px;width:74px">MATRIX =</div><div class="abs fld" style="left:350px;top:519px;width:62px"><span style="right:19px">16</span></div>
<div class="abs mt lab" style="left:277px;top:550px;width:74px">CX =</div><div class="abs fld" style="left:350px;top:550px;width:62px"><span style="right:19px">10</span></div>
<div class="abs mt lab" style="left:277px;top:581px;width:74px">CY =</div><div class="abs fld" style="left:350px;top:581px;width:62px"><span style="right:21px">6</span></div>
<div class="abs win" style="left:0px;top:603px;width:272px;height:318px;border-radius:8px 8px 0 0"></div><div class="abs tbar" style="left:1px;top:604px;width:270px;height:23px;border-radius:7px 7px 0 0"></div><div class="abs" style="left:5px;top:627px;width:262px;height:289px;background:#c0c0c0"></div><div class="abs wicon" style="left:7px;top:609px"></div><div class="abs ttl" style="left:1px;top:604px;width:271px;height:23px;line-height:23px;text-align:center;word-spacing:-.7px">21)&nbsp;&nbsp; GPC+PCh</div><div class="abs wbtn" style="left:249px;top:606px"><svg width="18" height="18"><path d="M6.200 6.200l5.600 5.600M11.800 6.200l-5.600 5.600" stroke="#000" stroke-width="2.400" stroke-linecap="round"/></svg></div><svg class="abs " style="left:8px;top:629px" width="257" height="257" viewBox="0 0 257 257" shape-rendering="crispEdges"><rect width="257" height="257" fill="#737373"/><rect x="1" y="1" width="15" height="15" fill="#000000"/><rect x="17" y="1" width="15" height="15" fill="#000000"/><rect x="33" y="1" width="15" height="15" fill="#000000"/><rect x="49" y="1" width="15" height="15" fill="#000000"/><rect x="65" y="1" width="15" height="15" fill="#000000"/><rect x="81" y="1" width="15" height="15" fill="#101010"/><rect x="97" y="1" width="15" height="15" fill="#000000"/><rect x="113" y="1" width="15" height="15" fill="#000000"/><rect x="129" y="1" width="15" height="15" fill="#101010"/><rect x="145" y="1" width="15" height="15" fill="#000000"/><rect x="161" y="1" width="15" height="15" fill="#000000"/><rect x="177" y="1" width="15" height="15" fill="#202020"/><rect x="193" y="1" width="15" height="15" fill="#000000"/><rect x="209" y="1" width="15" height="15" fill="#101010"/><rect x="225" y="1" width="15" height="15" fill="#000000"/><rect x="241" y="1" width="15" height="15" fill="#000000"/><rect x="1" y="17" width="15" height="15" fill="#000000"/><rect x="17" y="17" width="15" height="15" fill="#000000"/><rect x="33" y="17" width="15" height="15" fill="#000000"/><rect x="49" y="17" width="15" height="15" fill="#000000"/><rect x="65" y="17" width="15" height="15" fill="#101010"/><rect x="81" y="17" width="15" height="15" fill="#303030"/><rect x="97" y="17" width="15" height="15" fill="#000000"/><rect x="113" y="17" width="15" height="15" fill="#000000"/><rect x="129" y="17" width="15" height="15" fill="#303030"/><rect x="145" y="17" width="15" height="15" fill="#000000"/><rect x="161" y="17" width="15" height="15" fill="#303030"/><rect x="177" y="17" width="15" height="15" fill="#000000"/><rect x="193" y="17" width="15" height="15" fill="#404040"/><rect x="209" y="17" width="15" height="15" fill="#000000"/><rect x="225" y="17" width="15" height="15" fill="#000000"/><rect x="241" y="17" width="15" height="15" fill="#000000"/><rect x="1" y="33" width="15" height="15" fill="#000000"/><rect x="17" y="33" width="15" height="15" fill="#101010"/><rect x="33" y="33" width="15" height="15" fill="#000000"/><rect x="49" y="33" width="15" height="15" fill="#000000"/><rect x="65" y="33" width="15" height="15" fill="#202020"/><rect x="81" y="33" width="15" height="15" fill="#303030"/><rect x="97" y="33" width="15" height="15" fill="#202020"/><rect x="113" y="33" width="15" height="15" fill="#404040"/><rect x="129" y="33" width="15" height="15" fill="#505050"/><rect x="145" y="33" width="15" height="15" fill="#404040"/><rect x="161" y="33" width="15" height="15" fill="#101010"/><rect x="177" y="33" width="15" height="15" fill="#101010"/><rect x="193" y="33" width="15" height="15" fill="#101010"/><rect x="209" y="33" width="15" height="15" fill="#000000"/><rect x="225" y="33" width="15" height="15" fill="#000000"/><rect x="241" y="33" width="15" height="15" fill="#000000"/><rect x="1" y="49" width="15" height="15" fill="#000000"/><rect x="17" y="49" width="15" height="15" fill="#000000"/><rect x="33" y="49" width="15" height="15" fill="#000000"/><rect x="49" y="49" width="15" height="15" fill="#202020"/><rect x="65" y="49" width="15" height="15" fill="#606060"/><rect x="81" y="49" width="15" height="15" fill="#808080"/><rect x="97" y="49" width="15" height="15" fill="#909090"/><rect x="113" y="49" width="15" height="15" fill="#909090"/><rect x="129" y="49" width="15" height="15" fill="#a0a0a0"/><rect x="145" y="49" width="15" height="15" fill="#a0a0a0"/><rect x="161" y="49" width="15" height="15" fill="#707070"/><rect x="177" y="49" width="15" height="15" fill="#707070"/><rect x="193" y="49" width="15" height="15" fill="#404040"/><rect x="209" y="49" width="15" height="15" fill="#101010"/><rect x="225" y="49" width="15" height="15" fill="#000000"/><rect x="241" y="49" width="15" height="15" fill="#000000"/><rect x="1" y="65" width="15" height="15" fill="#000000"/><rect x="17" y="65" width="15" height="15" fill="#000000"/><rect x="33" y="65" width="15" height="15" fill="#202020"/><rect x="49" y="65" width="15" height="15" fill="#303030"/><rect x="65" y="65" width="15" height="15" fill="#909090"/><rect x="81" y="65" width="15" height="15" fill="#c0c0c0"/><rect x="97" y="65" width="15" height="15" fill="#e0e0e0"/><rect x="113" y="65" width="15" height="15" fill="#d0d0d0"/><rect x="129" y="65" width="15" height="15" fill="#e0e0e0"/><rect x="145" y="65" width="15" height="15" fill="#e0e0e0"/><rect x="161" y="65" width="15" height="15" fill="#d0d0d0"/><rect x="177" y="65" width="15" height="15" fill="#b0b0b0"/><rect x="193" y="65" width="15" height="15" fill="#606060"/><rect x="209" y="65" width="15" height="15" fill="#101010"/><rect x="225" y="65" width="15" height="15" fill="#101010"/><rect x="241" y="65" width="15" height="15" fill="#000000"/><rect x="1" y="81" width="15" height="15" fill="#000000"/><rect x="17" y="81" width="15" height="15" fill="#000000"/><rect x="33" y="81" width="15" height="15" fill="#101010"/><rect x="49" y="81" width="15" height="15" fill="#202020"/><rect x="65" y="81" width="15" height="15" fill="#808080"/><rect x="81" y="81" width="15" height="15" fill="#f0f0f0"/><rect x="97" y="81" width="15" height="15" fill="#e0e0e0"/><rect x="113" y="81" width="15" height="15" fill="#d0d0d0"/><rect x="129" y="81" width="15" height="15" fill="#d0d0d0"/><rect x="145" y="81" width="15" height="15" fill="#303030"/><rect x="161" y="81" width="15" height="15" fill="#d0d0d0"/><rect x="177" y="81" width="15" height="15" fill="#b0b0b0"/><rect x="193" y="81" width="15" height="15" fill="#707070"/><rect x="209" y="81" width="15" height="15" fill="#101010"/><rect x="225" y="81" width="15" height="15" fill="#101010"/><rect x="241" y="81" width="15" height="15" fill="#000000"/><rect x="1" y="97" width="15" height="15" fill="#000000"/><rect x="17" y="97" width="15" height="15" fill="#000000"/><rect x="33" y="97" width="15" height="15" fill="#101010"/><rect x="49" y="97" width="15" height="15" fill="#303030"/><rect x="65" y="97" width="15" height="15" fill="#909090"/><rect x="81" y="97" width="15" height="15" fill="#f0f0f0"/><rect x="97" y="97" width="15" height="15" fill="#d0d0d0"/><rect x="113" y="97" width="15" height="15" fill="#c0c0c0"/><rect x="129" y="97" width="15" height="15" fill="#c0c0c0"/><rect x="145" y="97" width="15" height="15" fill="#d0d0d0"/><rect x="161" y="97" width="15" height="15" fill="#d0d0d0"/><rect x="177" y="97" width="15" height="15" fill="#c0c0c0"/><rect x="193" y="97" width="15" height="15" fill="#808080"/><rect x="209" y="97" width="15" height="15" fill="#101010"/><rect x="225" y="97" width="15" height="15" fill="#101010"/><rect x="241" y="97" width="15" height="15" fill="#000000"/><rect x="1" y="113" width="15" height="15" fill="#000000"/><rect x="17" y="113" width="15" height="15" fill="#101010"/><rect x="33" y="113" width="15" height="15" fill="#101010"/><rect x="49" y="113" width="15" height="15" fill="#404040"/><rect x="65" y="113" width="15" height="15" fill="#a0a0a0"/><rect x="81" y="113" width="15" height="15" fill="#e0e0e0"/><rect x="97" y="113" width="15" height="15" fill="#d0d0d0"/><rect x="113" y="113" width="15" height="15" fill="#c0c0c0"/><rect x="129" y="113" width="15" height="15" fill="#c0c0c0"/><rect x="145" y="113" width="15" height="15" fill="#d0d0d0"/><rect x="161" y="113" width="15" height="15" fill="#d0d0d0"/><rect x="177" y="113" width="15" height="15" fill="#d0d0d0"/><rect x="193" y="113" width="15" height="15" fill="#808080"/><rect x="209" y="113" width="15" height="15" fill="#101010"/><rect x="225" y="113" width="15" height="15" fill="#101010"/><rect x="241" y="113" width="15" height="15" fill="#000000"/><rect x="1" y="129" width="15" height="15" fill="#000000"/><rect x="17" y="129" width="15" height="15" fill="#101010"/><rect x="33" y="129" width="15" height="15" fill="#101010"/><rect x="49" y="129" width="15" height="15" fill="#303030"/><rect x="65" y="129" width="15" height="15" fill="#909090"/><rect x="81" y="129" width="15" height="15" fill="#d0d0d0"/><rect x="97" y="129" width="15" height="15" fill="#d0d0d0"/><rect x="113" y="129" width="15" height="15" fill="#c0c0c0"/><rect x="129" y="129" width="15" height="15" fill="#b0b0b0"/><rect x="145" y="129" width="15" height="15" fill="#c0c0c0"/><rect x="161" y="129" width="15" height="15" fill="#d0d0d0"/><rect x="177" y="129" width="15" height="15" fill="#d0d0d0"/><rect x="193" y="129" width="15" height="15" fill="#909090"/><rect x="209" y="129" width="15" height="15" fill="#202020"/><rect x="225" y="129" width="15" height="15" fill="#101010"/><rect x="241" y="129" width="15" height="15" fill="#000000"/><rect x="1" y="145" width="15" height="15" fill="#000000"/><rect x="17" y="145" width="15" height="15" fill="#101010"/><rect x="33" y="145" width="15" height="15" fill="#101010"/><rect x="49" y="145" width="15" height="15" fill="#303030"/><rect x="65" y="145" width="15" height="15" fill="#808080"/><rect x="81" y="145" width="15" height="15" fill="#e0e0e0"/><rect x="97" y="145" width="15" height="15" fill="#d0d0d0"/><rect x="113" y="145" width="15" height="15" fill="#c0c0c0"/><rect x="129" y="145" width="15" height="15" fill="#b0b0b0"/><rect x="145" y="145" width="15" height="15" fill="#d0d0d0"/><rect x="161" y="145" width="15" height="15" fill="#e0e0e0"/><rect x="177" y="145" width="15" height="15" fill="#d0d0d0"/><rect x="193" y="145" width="15" height="15" fill="#909090"/><rect x="209" y="145" width="15" height="15" fill="#202020"/><rect x="225" y="145" width="15" height="15" fill="#101010"/><rect x="241" y="145" width="15" height="15" fill="#000000"/><rect x="1" y="161" width="15" height="15" fill="#000000"/><rect x="17" y="161" width="15" height="15" fill="#000000"/><rect x="33" y="161" width="15" height="15" fill="#101010"/><rect x="49" y="161" width="15" height="15" fill="#303030"/><rect x="65" y="161" width="15" height="15" fill="#a0a0a0"/><rect x="81" y="161" width="15" height="15" fill="#ffffff"/><rect x="97" y="161" width="15" height="15" fill="#e0e0e0"/><rect x="113" y="161" width="15" height="15" fill="#d0d0d0"/><rect x="129" y="161" width="15" height="15" fill="#c0c0c0"/><rect x="145" y="161" width="15" height="15" fill="#d0d0d0"/><rect x="161" y="161" width="15" height="15" fill="#f0f0f0"/><rect x="177" y="161" width="15" height="15" fill="#e0e0e0"/><rect x="193" y="161" width="15" height="15" fill="#a0a0a0"/><rect x="209" y="161" width="15" height="15" fill="#202020"/><rect x="225" y="161" width="15" height="15" fill="#101010"/><rect x="241" y="161" width="15" height="15" fill="#000000"/><rect x="1" y="177" width="15" height="15" fill="#000000"/><rect x="17" y="177" width="15" height="15" fill="#101010"/><rect x="33" y="177" width="15" height="15" fill="#101010"/><rect x="49" y="177" width="15" height="15" fill="#202020"/><rect x="65" y="177" width="15" height="15" fill="#606060"/><rect x="81" y="177" width="15" height="15" fill="#a0a0a0"/><rect x="97" y="177" width="15" height="15" fill="#909090"/><rect x="113" y="177" width="15" height="15" fill="#808080"/><rect x="129" y="177" width="15" height="15" fill="#808080"/><rect x="145" y="177" width="15" height="15" fill="#909090"/><rect x="161" y="177" width="15" height="15" fill="#a0a0a0"/><rect x="177" y="177" width="15" height="15" fill="#a0a0a0"/><rect x="193" y="177" width="15" height="15" fill="#606060"/><rect x="209" y="177" width="15" height="15" fill="#202020"/><rect x="225" y="177" width="15" height="15" fill="#101010"/><rect x="241" y="177" width="15" height="15" fill="#000000"/><rect x="1" y="193" width="15" height="15" fill="#000000"/><rect x="17" y="193" width="15" height="15" fill="#000000"/><rect x="33" y="193" width="15" height="15" fill="#000000"/><rect x="49" y="193" width="15" height="15" fill="#101010"/><rect x="65" y="193" width="15" height="15" fill="#202020"/><rect x="81" y="193" width="15" height="15" fill="#303030"/><rect x="97" y="193" width="15" height="15" fill="#202020"/><rect x="113" y="193" width="15" height="15" fill="#202020"/><rect x="129" y="193" width="15" height="15" fill="#303030"/><rect x="145" y="193" width="15" height="15" fill="#303030"/><rect x="161" y="193" width="15" height="15" fill="#202020"/><rect x="177" y="193" width="15" height="15" fill="#202020"/><rect x="193" y="193" width="15" height="15" fill="#202020"/><rect x="209" y="193" width="15" height="15" fill="#101010"/><rect x="225" y="193" width="15" height="15" fill="#000000"/><rect x="241" y="193" width="15" height="15" fill="#000000"/><rect x="1" y="209" width="15" height="15" fill="#000000"/><rect x="17" y="209" width="15" height="15" fill="#000000"/><rect x="33" y="209" width="15" height="15" fill="#000000"/><rect x="49" y="209" width="15" height="15" fill="#101010"/><rect x="65" y="209" width="15" height="15" fill="#202020"/><rect x="81" y="209" width="15" height="15" fill="#202020"/><rect x="97" y="209" width="15" height="15" fill="#101010"/><rect x="113" y="209" width="15" height="15" fill="#101010"/><rect x="129" y="209" width="15" height="15" fill="#202020"/><rect x="145" y="209" width="15" height="15" fill="#202020"/><rect x="161" y="209" width="15" height="15" fill="#101010"/><rect x="177" y="209" width="15" height="15" fill="#101010"/><rect x="193" y="209" width="15" height="15" fill="#202020"/><rect x="209" y="209" width="15" height="15" fill="#101010"/><rect x="225" y="209" width="15" height="15" fill="#000000"/><rect x="241" y="209" width="15" height="15" fill="#000000"/><rect x="1" y="225" width="15" height="15" fill="#000000"/><rect x="17" y="225" width="15" height="15" fill="#101010"/><rect x="33" y="225" width="15" height="15" fill="#000000"/><rect x="49" y="225" width="15" height="15" fill="#202020"/><rect x="65" y="225" width="15" height="15" fill="#303030"/><rect x="81" y="225" width="15" height="15" fill="#101010"/><rect x="97" y="225" width="15" height="15" fill="#101010"/><rect x="113" y="225" width="15" height="15" fill="#000000"/><rect x="129" y="225" width="15" height="15" fill="#000000"/><rect x="145" y="225" width="15" height="15" fill="#101010"/><rect x="161" y="225" width="15" height="15" fill="#101010"/><rect x="177" y="225" width="15" height="15" fill="#101010"/><rect x="193" y="225" width="15" height="15" fill="#101010"/><rect x="209" y="225" width="15" height="15" fill="#000000"/><rect x="225" y="225" width="15" height="15" fill="#000000"/><rect x="241" y="225" width="15" height="15" fill="#000000"/><rect x="1" y="241" width="15" height="15" fill="#000000"/><rect x="17" y="241" width="15" height="15" fill="#404040"/><rect x="33" y="241" width="15" height="15" fill="#000000"/><rect x="49" y="241" width="15" height="15" fill="#000000"/><rect x="65" y="241" width="15" height="15" fill="#101010"/><rect x="81" y="241" width="15" height="15" fill="#000000"/><rect x="97" y="241" width="15" height="15" fill="#000000"/><rect x="113" y="241" width="15" height="15" fill="#000000"/><rect x="129" y="241" width="15" height="15" fill="#101010"/><rect x="145" y="241" width="15" height="15" fill="#000000"/><rect x="161" y="241" width="15" height="15" fill="#000000"/><rect x="177" y="241" width="15" height="15" fill="#000000"/><rect x="193" y="241" width="15" height="15" fill="#101010"/><rect x="209" y="241" width="15" height="15" fill="#000000"/><rect x="225" y="241" width="15" height="15" fill="#404040"/><rect x="241" y="241" width="15" height="15" fill="#202020"/></svg><div class="abs mt" style="left:14px;top:890px;white-space:pre;word-spacing:.6px">X=   9, Y=  10</div>
<div class="abs win" style="left:272px;top:603px;width:272px;height:318px;border-radius:8px 8px 0 0"></div><div class="abs tbar" style="left:273px;top:604px;width:270px;height:23px;border-radius:7px 7px 0 0"></div><div class="abs" style="left:277px;top:627px;width:262px;height:289px;background:#c0c0c0"></div><div class="abs wicon" style="left:279px;top:609px"></div><div class="abs ttl" style="left:273px;top:604px;width:271px;height:23px;line-height:23px;text-align:center;word-spacing:-.7px">22)&nbsp;&nbsp; NAA+NAAG</div><div class="abs wbtn" style="left:521px;top:606px"><svg width="18" height="18"><path d="M6.200 6.200l5.600 5.600M11.800 6.200l-5.600 5.600" stroke="#000" stroke-width="2.400" stroke-linecap="round"/></svg></div><svg class="abs " style="left:280px;top:629px" width="257" height="257" viewBox="0 0 257 257" shape-rendering="crispEdges"><rect width="257" height="257" fill="#737373"/><rect x="1" y="1" width="15" height="15" fill="#000000"/><rect x="17" y="1" width="15" height="15" fill="#000000"/><rect x="33" y="1" width="15" height="15" fill="#101010"/><rect x="49" y="1" width="15" height="15" fill="#000000"/><rect x="65" y="1" width="15" height="15" fill="#000000"/><rect x="81" y="1" width="15" height="15" fill="#101010"/><rect x="97" y="1" width="15" height="15" fill="#000000"/><rect x="113" y="1" width="15" height="15" fill="#000000"/><rect x="129" y="1" width="15" height="15" fill="#101010"/><rect x="145" y="1" width="15" height="15" fill="#000000"/><rect x="161" y="1" width="15" height="15" fill="#000000"/><rect x="177" y="1" width="15" height="15" fill="#707070"/><rect x="193" y="1" width="15" height="15" fill="#000000"/><rect x="209" y="1" width="15" height="15" fill="#000000"/><rect x="225" y="1" width="15" height="15" fill="#000000"/><rect x="241" y="1" width="15" height="15" fill="#000000"/><rect x="1" y="17" width="15" height="15" fill="#000000"/><rect x="17" y="17" width="15" height="15" fill="#000000"/><rect x="33" y="17" width="15" height="15" fill="#101010"/><rect x="49" y="17" width="15" height="15" fill="#202020"/><rect x="65" y="17" width="15" height="15" fill="#000000"/><rect x="81" y="17" width="15" height="15" fill="#101010"/><rect x="97" y="17" width="15" height="15" fill="#000000"/><rect x="113" y="17" width="15" height="15" fill="#000000"/><rect x="129" y="17" width="15" height="15" fill="#101010"/><rect x="145" y="17" width="15" height="15" fill="#000000"/><rect x="161" y="17" width="15" height="15" fill="#000000"/><rect x="177" y="17" width="15" height="15" fill="#000000"/><rect x="193" y="17" width="15" height="15" fill="#000000"/><rect x="209" y="17" width="15" height="15" fill="#000000"/><rect x="225" y="17" width="15" height="15" fill="#000000"/><rect x="241" y="17" width="15" height="15" fill="#000000"/><rect x="1" y="33" width="15" height="15" fill="#000000"/><rect x="17" y="33" width="15" height="15" fill="#000000"/><rect x="33" y="33" width="15" height="15" fill="#000000"/><rect x="49" y="33" width="15" height="15" fill="#101010"/><rect x="65" y="33" width="15" height="15" fill="#202020"/><rect x="81" y="33" width="15" height="15" fill="#101010"/><rect x="97" y="33" width="15" height="15" fill="#101010"/><rect x="113" y="33" width="15" height="15" fill="#202020"/><rect x="129" y="33" width="15" height="15" fill="#202020"/><rect x="145" y="33" width="15" height="15" fill="#101010"/><rect x="161" y="33" width="15" height="15" fill="#101010"/><rect x="177" y="33" width="15" height="15" fill="#101010"/><rect x="193" y="33" width="15" height="15" fill="#000000"/><rect x="209" y="33" width="15" height="15" fill="#000000"/><rect x="225" y="33" width="15" height="15" fill="#000000"/><rect x="241" y="33" width="15" height="15" fill="#000000"/><rect x="1" y="49" width="15" height="15" fill="#000000"/><rect x="17" y="49" width="15" height="15" fill="#000000"/><rect x="33" y="49" width="15" height="15" fill="#000000"/><rect x="49" y="49" width="15" height="15" fill="#202020"/><rect x="65" y="49" width="15" height="15" fill="#505050"/><rect x="81" y="49" width="15" height="15" fill="#404040"/><rect x="97" y="49" width="15" height="15" fill="#404040"/><rect x="113" y="49" width="15" height="15" fill="#505050"/><rect x="129" y="49" width="15" height="15" fill="#606060"/><rect x="145" y="49" width="15" height="15" fill="#505050"/><rect x="161" y="49" width="15" height="15" fill="#505050"/><rect x="177" y="49" width="15" height="15" fill="#505050"/><rect x="193" y="49" width="15" height="15" fill="#202020"/><rect x="209" y="49" width="15" height="15" fill="#000000"/><rect x="225" y="49" width="15" height="15" fill="#000000"/><rect x="241" y="49" width="15" height="15" fill="#000000"/><rect x="1" y="65" width="15" height="15" fill="#000000"/><rect x="17" y="65" width="15" height="15" fill="#101010"/><rect x="33" y="65" width="15" height="15" fill="#101010"/><rect x="49" y="65" width="15" height="15" fill="#505050"/><rect x="65" y="65" width="15" height="15" fill="#a0a0a0"/><rect x="81" y="65" width="15" height="15" fill="#a0a0a0"/><rect x="97" y="65" width="15" height="15" fill="#a0a0a0"/><rect x="113" y="65" width="15" height="15" fill="#a0a0a0"/><rect x="129" y="65" width="15" height="15" fill="#a0a0a0"/><rect x="145" y="65" width="15" height="15" fill="#a0a0a0"/><rect x="161" y="65" width="15" height="15" fill="#a0a0a0"/><rect x="177" y="65" width="15" height="15" fill="#a0a0a0"/><rect x="193" y="65" width="15" height="15" fill="#505050"/><rect x="209" y="65" width="15" height="15" fill="#101010"/><rect x="225" y="65" width="15" height="15" fill="#000000"/><rect x="241" y="65" width="15" height="15" fill="#000000"/><rect x="1" y="81" width="15" height="15" fill="#000000"/><rect x="17" y="81" width="15" height="15" fill="#000000"/><rect x="33" y="81" width="15" height="15" fill="#202020"/><rect x="49" y="81" width="15" height="15" fill="#505050"/><rect x="65" y="81" width="15" height="15" fill="#b0b0b0"/><rect x="81" y="81" width="15" height="15" fill="#d0d0d0"/><rect x="97" y="81" width="15" height="15" fill="#a0a0a0"/><rect x="113" y="81" width="15" height="15" fill="#b0b0b0"/><rect x="129" y="81" width="15" height="15" fill="#b0b0b0"/><rect x="145" y="81" width="15" height="15" fill="#606060"/><rect x="161" y="81" width="15" height="15" fill="#a0a0a0"/><rect x="177" y="81" width="15" height="15" fill="#b0b0b0"/><rect x="193" y="81" width="15" height="15" fill="#707070"/><rect x="209" y="81" width="15" height="15" fill="#101010"/><rect x="225" y="81" width="15" height="15" fill="#000000"/><rect x="241" y="81" width="15" height="15" fill="#000000"/><rect x="1" y="97" width="15" height="15" fill="#000000"/><rect x="17" y="97" width="15" height="15" fill="#101010"/><rect x="33" y="97" width="15" height="15" fill="#202020"/><rect x="49" y="97" width="15" height="15" fill="#505050"/><rect x="65" y="97" width="15" height="15" fill="#c0c0c0"/><rect x="81" y="97" width="15" height="15" fill="#e0e0e0"/><rect x="97" y="97" width="15" height="15" fill="#b0b0b0"/><rect x="113" y="97" width="15" height="15" fill="#b0b0b0"/><rect x="129" y="97" width="15" height="15" fill="#b0b0b0"/><rect x="145" y="97" width="15" height="15" fill="#a0a0a0"/><rect x="161" y="97" width="15" height="15" fill="#b0b0b0"/><rect x="177" y="97" width="15" height="15" fill="#b0b0b0"/><rect x="193" y="97" width="15" height="15" fill="#606060"/><rect x="209" y="97" width="15" height="15" fill="#101010"/><rect x="225" y="97" width="15" height="15" fill="#101010"/><rect x="241" y="97" width="15" height="15" fill="#000000"/><rect x="1" y="113" width="15" height="15" fill="#000000"/><rect x="17" y="113" width="15" height="15" fill="#101010"/><rect x="33" y="113" width="15" height="15" fill="#202020"/><rect x="49" y="113" width="15" height="15" fill="#505050"/><rect x="65" y="113" width="15" height="15" fill="#c0c0c0"/><rect x="81" y="113" width="15" height="15" fill="#e0e0e0"/><rect x="97" y="113" width="15" height="15" fill="#c0c0c0"/><rect x="113" y="113" width="15" height="15" fill="#c0c0c0"/><rect x="129" y="113" width="15" height="15" fill="#d0d0d0"/><rect x="145" y="113" width="15" height="15" fill="#c0c0c0"/><rect x="161" y="113" width="15" height="15" fill="#e0e0e0"/><rect x="177" y="113" width="15" height="15" fill="#c0c0c0"/><rect x="193" y="113" width="15" height="15" fill="#707070"/><rect x="209" y="113" width="15" height="15" fill="#101010"/><rect x="225" y="113" width="15" height="15" fill="#101010"/><rect x="241" y="113" width="15" height="15" fill="#000000"/><rect x="1" y="129" width="15" height="15" fill="#000000"/><rect x="17" y="129" width="15" height="15" fill="#101010"/><rect x="33" y="129" width="15" height="15" fill="#202020"/><rect x="49" y="129" width="15" height="15" fill="#606060"/><rect x="65" y="129" width="15" height="15" fill="#c0c0c0"/><rect x="81" y="129" width="15" height="15" fill="#e0e0e0"/><rect x="97" y="129" width="15" height="15" fill="#e0e0e0"/><rect x="113" y="129" width="15" height="15" fill="#e0e0e0"/><rect x="129" y="129" width="15" height="15" fill="#e0e0e0"/><rect x="145" y="129" width="15" height="15" fill="#d0d0d0"/><rect x="161" y="129" width="15" height="15" fill="#e0e0e0"/><rect x="177" y="129" width="15" height="15" fill="#d0d0d0"/><rect x="193" y="129" width="15" height="15" fill="#808080"/><rect x="209" y="129" width="15" height="15" fill="#202020"/><rect x="225" y="129" width="15" height="15" fill="#101010"/><rect x="241" y="129" width="15" height="15" fill="#000000"/><rect x="1" y="145" width="15" height="15" fill="#000000"/><rect x="17" y="145" width="15" height="15" fill="#101010"/><rect x="33" y="145" width="15" height="15" fill="#303030"/><rect x="49" y="145" width="15" height="15" fill="#606060"/><rect x="65" y="145" width="15" height="15" fill="#d0d0d0"/><rect x="81" y="145" width="15" height="15" fill="#e0e0e0"/><rect x="97" y="145" width="15" height="15" fill="#d0d0d0"/><rect x="113" y="145" width="15" height="15" fill="#e0e0e0"/><rect x="129" y="145" width="15" height="15" fill="#e0e0e0"/><rect x="145" y="145" width="15" height="15" fill="#e0e0e0"/><rect x="161" y="145" width="15" height="15" fill="#e0e0e0"/><rect x="177" y="145" width="15" height="15" fill="#e0e0e0"/><rect x="193" y="145" width="15" height="15" fill="#808080"/><rect x="209" y="145" width="15" height="15" fill="#202020"/><rect x="225" y="145" width="15" height="15" fill="#101010"/><rect x="241" y="145" width="15" height="15" fill="#000000"/><rect x="1" y="161" width="15" height="15" fill="#000000"/><rect x="17" y="161" width="15" height="15" fill="#101010"/><rect x="33" y="161" width="15" height="15" fill="#202020"/><rect x="49" y="161" width="15" height="15" fill="#707070"/><rect x="65" y="161" width="15" height="15" fill="#e0e0e0"/><rect x="81" y="161" width="15" height="15" fill="#f0f0f0"/><rect x="97" y="161" width="15" height="15" fill="#e0e0e0"/><rect x="113" y="161" width="15" height="15" fill="#f0f0f0"/><rect x="129" y="161" width="15" height="15" fill="#f0f0f0"/><rect x="145" y="161" width="15" height="15" fill="#f0f0f0"/><rect x="161" y="161" width="15" height="15" fill="#f0f0f0"/><rect x="177" y="161" width="15" height="15" fill="#ffffff"/><rect x="193" y="161" width="15" height="15" fill="#909090"/><rect x="209" y="161" width="15" height="15" fill="#202020"/><rect x="225" y="161" width="15" height="15" fill="#101010"/><rect x="241" y="161" width="15" height="15" fill="#000000"/><rect x="1" y="177" width="15" height="15" fill="#000000"/><rect x="17" y="177" width="15" height="15" fill="#101010"/><rect x="33" y="177" width="15" height="15" fill="#202020"/><rect x="49" y="177" width="15" height="15" fill="#707070"/><rect x="65" y="177" width="15" height="15" fill="#d0d0d0"/><rect x="81" y="177" width="15" height="15" fill="#e0e0e0"/><rect x="97" y="177" width="15" height="15" fill="#e0e0e0"/><rect x="113" y="177" width="15" height="15" fill="#e0e0e0"/><rect x="129" y="177" width="15" height="15" fill="#e0e0e0"/><rect x="145" y="177" width="15" height="15" fill="#e0e0e0"/><rect x="161" y="177" width="15" height="15" fill="#e0e0e0"/><rect x="177" y="177" width="15" height="15" fill="#e0e0e0"/><rect x="193" y="177" width="15" height="15" fill="#909090"/><rect x="209" y="177" width="15" height="15" fill="#202020"/><rect x="225" y="177" width="15" height="15" fill="#101010"/><rect x="241" y="177" width="15" height="15" fill="#000000"/><rect x="1" y="193" width="15" height="15" fill="#000000"/><rect x="17" y="193" width="15" height="15" fill="#000000"/><rect x="33" y="193" width="15" height="15" fill="#101010"/><rect x="49" y="193" width="15" height="15" fill="#303030"/><rect x="65" y="193" width="15" height="15" fill="#606060"/><rect x="81" y="193" width="15" height="15" fill="#606060"/><rect x="97" y="193" width="15" height="15" fill="#505050"/><rect x="113" y="193" width="15" height="15" fill="#505050"/><rect x="129" y="193" width="15" height="15" fill="#606060"/><rect x="145" y="193" width="15" height="15" fill="#606060"/><rect x="161" y="193" width="15" height="15" fill="#606060"/><rect x="177" y="193" width="15" height="15" fill="#606060"/><rect x="193" y="193" width="15" height="15" fill="#404040"/><rect x="209" y="193" width="15" height="15" fill="#101010"/><rect x="225" y="193" width="15" height="15" fill="#000000"/><rect x="241" y="193" width="15" height="15" fill="#000000"/><rect x="1" y="209" width="15" height="15" fill="#000000"/><rect x="17" y="209" width="15" height="15" fill="#000000"/><rect x="33" y="209" width="15" height="15" fill="#202020"/><rect x="49" y="209" width="15" height="15" fill="#000000"/><rect x="65" y="209" width="15" height="15" fill="#202020"/><rect x="81" y="209" width="15" height="15" fill="#202020"/><rect x="97" y="209" width="15" height="15" fill="#101010"/><rect x="113" y="209" width="15" height="15" fill="#101010"/><rect x="129" y="209" width="15" height="15" fill="#202020"/><rect x="145" y="209" width="15" height="15" fill="#202020"/><rect x="161" y="209" width="15" height="15" fill="#202020"/><rect x="177" y="209" width="15" height="15" fill="#202020"/><rect x="193" y="209" width="15" height="15" fill="#101010"/><rect x="209" y="209" width="15" height="15" fill="#101010"/><rect x="225" y="209" width="15" height="15" fill="#000000"/><rect x="241" y="209" width="15" height="15" fill="#000000"/><rect x="1" y="225" width="15" height="15" fill="#000000"/><rect x="17" y="225" width="15" height="15" fill="#101010"/><rect x="33" y="225" width="15" height="15" fill="#000000"/><rect x="49" y="225" width="15" height="15" fill="#101010"/><rect x="65" y="225" width="15" height="15" fill="#000000"/><rect x="81" y="225" width="15" height="15" fill="#000000"/><rect x="97" y="225" width="15" height="15" fill="#202020"/><rect x="113" y="225" width="15" height="15" fill="#101010"/><rect x="129" y="225" width="15" height="15" fill="#202020"/><rect x="145" y="225" width="15" height="15" fill="#101010"/><rect x="161" y="225" width="15" height="15" fill="#101010"/><rect x="177" y="225" width="15" height="15" fill="#000000"/><rect x="193" y="225" width="15" height="15" fill="#101010"/><rect x="209" y="225" width="15" height="15" fill="#000000"/><rect x="225" y="225" width="15" height="15" fill="#000000"/><rect x="241" y="225" width="15" height="15" fill="#000000"/><rect x="1" y="241" width="15" height="15" fill="#000000"/><rect x="17" y="241" width="15" height="15" fill="#000000"/><rect x="33" y="241" width="15" height="15" fill="#000000"/><rect x="49" y="241" width="15" height="15" fill="#101010"/><rect x="65" y="241" width="15" height="15" fill="#101010"/><rect x="81" y="241" width="15" height="15" fill="#101010"/><rect x="97" y="241" width="15" height="15" fill="#000000"/><rect x="113" y="241" width="15" height="15" fill="#000000"/><rect x="129" y="241" width="15" height="15" fill="#000000"/><rect x="145" y="241" width="15" height="15" fill="#000000"/><rect x="161" y="241" width="15" height="15" fill="#000000"/><rect x="177" y="241" width="15" height="15" fill="#101010"/><rect x="193" y="241" width="15" height="15" fill="#f0f0f0"/><rect x="209" y="241" width="15" height="15" fill="#000000"/><rect x="225" y="241" width="15" height="15" fill="#000000"/><rect x="241" y="241" width="15" height="15" fill="#000000"/></svg><div class="abs mt" style="left:286px;top:890px;white-space:pre;word-spacing:.6px">X=   9, Y=  10</div>
<div class="abs win" style="left:544px;top:603px;width:272px;height:318px;border-radius:8px 8px 0 0"></div><div class="abs tbar" style="left:545px;top:604px;width:270px;height:23px;border-radius:7px 7px 0 0"></div><div class="abs" style="left:549px;top:627px;width:262px;height:289px;background:#c0c0c0"></div><div class="abs wicon" style="left:551px;top:609px"></div><div class="abs ttl" style="left:545px;top:604px;width:271px;height:23px;line-height:23px;text-align:center;word-spacing:-.7px">23)&nbsp;&nbsp; Gln+Glu</div><div class="abs wbtn" style="left:793px;top:606px"><svg width="18" height="18"><path d="M6.200 6.200l5.600 5.600M11.800 6.200l-5.600 5.600" stroke="#000" stroke-width="2.400" stroke-linecap="round"/></svg></div><svg class="abs " style="left:552px;top:629px" width="257" height="257" viewBox="0 0 257 257" shape-rendering="crispEdges"><rect width="257" height="257" fill="#737373"/><rect x="1" y="1" width="15" height="15" fill="#000000"/><rect x="17" y="1" width="15" height="15" fill="#000000"/><rect x="33" y="1" width="15" height="15" fill="#000000"/><rect x="49" y="1" width="15" height="15" fill="#000000"/><rect x="65" y="1" width="15" height="15" fill="#000000"/><rect x="81" y="1" width="15" height="15" fill="#000000"/><rect x="97" y="1" width="15" height="15" fill="#000000"/><rect x="113" y="1" width="15" height="15" fill="#000000"/><rect x="129" y="1" width="15" height="15" fill="#000000"/><rect x="145" y="1" width="15" height="15" fill="#000000"/><rect x="161" y="1" width="15" height="15" fill="#000000"/><rect x="177" y="1" width="15" height="15" fill="#404040"/><rect x="193" y="1" width="15" height="15" fill="#000000"/><rect x="209" y="1" width="15" height="15" fill="#000000"/><rect x="225" y="1" width="15" height="15" fill="#000000"/><rect x="241" y="1" width="15" height="15" fill="#000000"/><rect x="1" y="17" width="15" height="15" fill="#000000"/><rect x="17" y="17" width="15" height="15" fill="#000000"/><rect x="33" y="17" width="15" height="15" fill="#101010"/><rect x="49" y="17" width="15" height="15" fill="#000000"/><rect x="65" y="17" width="15" height="15" fill="#000000"/><rect x="81" y="17" width="15" height="15" fill="#000000"/><rect x="97" y="17" width="15" height="15" fill="#000000"/><rect x="113" y="17" width="15" height="15" fill="#000000"/><rect x="129" y="17" width="15" height="15" fill="#000000"/><rect x="145" y="17" width="15" height="15" fill="#000000"/><rect x="161" y="17" width="15" height="15" fill="#000000"/><rect x="177" y="17" width="15" height="15" fill="#101010"/><rect x="193" y="17" width="15" height="15" fill="#101010"/><rect x="209" y="17" width="15" height="15" fill="#000000"/><rect x="225" y="17" width="15" height="15" fill="#000000"/><rect x="241" y="17" width="15" height="15" fill="#000000"/><rect x="1" y="33" width="15" height="15" fill="#000000"/><rect x="17" y="33" width="15" height="15" fill="#000000"/><rect x="33" y="33" width="15" height="15" fill="#000000"/><rect x="49" y="33" width="15" height="15" fill="#202020"/><rect x="65" y="33" width="15" height="15" fill="#202020"/><rect x="81" y="33" width="15" height="15" fill="#101010"/><rect x="97" y="33" width="15" height="15" fill="#101010"/><rect x="113" y="33" width="15" height="15" fill="#101010"/><rect x="129" y="33" width="15" height="15" fill="#101010"/><rect x="145" y="33" width="15" height="15" fill="#202020"/><rect x="161" y="33" width="15" height="15" fill="#101010"/><rect x="177" y="33" width="15" height="15" fill="#101010"/><rect x="193" y="33" width="15" height="15" fill="#101010"/><rect x="209" y="33" width="15" height="15" fill="#101010"/><rect x="225" y="33" width="15" height="15" fill="#000000"/><rect x="241" y="33" width="15" height="15" fill="#000000"/><rect x="1" y="49" width="15" height="15" fill="#000000"/><rect x="17" y="49" width="15" height="15" fill="#000000"/><rect x="33" y="49" width="15" height="15" fill="#101010"/><rect x="49" y="49" width="15" height="15" fill="#202020"/><rect x="65" y="49" width="15" height="15" fill="#404040"/><rect x="81" y="49" width="15" height="15" fill="#505050"/><rect x="97" y="49" width="15" height="15" fill="#606060"/><rect x="113" y="49" width="15" height="15" fill="#707070"/><rect x="129" y="49" width="15" height="15" fill="#707070"/><rect x="145" y="49" width="15" height="15" fill="#606060"/><rect x="161" y="49" width="15" height="15" fill="#303030"/><rect x="177" y="49" width="15" height="15" fill="#303030"/><rect x="193" y="49" width="15" height="15" fill="#202020"/><rect x="209" y="49" width="15" height="15" fill="#101010"/><rect x="225" y="49" width="15" height="15" fill="#000000"/><rect x="241" y="49" width="15" height="15" fill="#000000"/><rect x="1" y="65" width="15" height="15" fill="#000000"/><rect x="17" y="65" width="15" height="15" fill="#101010"/><rect x="33" y="65" width="15" height="15" fill="#202020"/><rect x="49" y="65" width="15" height="15" fill="#505050"/><rect x="65" y="65" width="15" height="15" fill="#606060"/><rect x="81" y="65" width="15" height="15" fill="#606060"/><rect x="97" y="65" width="15" height="15" fill="#909090"/><rect x="113" y="65" width="15" height="15" fill="#b0b0b0"/><rect x="129" y="65" width="15" height="15" fill="#c0c0c0"/><rect x="145" y="65" width="15" height="15" fill="#c0c0c0"/><rect x="161" y="65" width="15" height="15" fill="#707070"/><rect x="177" y="65" width="15" height="15" fill="#707070"/><rect x="193" y="65" width="15" height="15" fill="#404040"/><rect x="209" y="65" width="15" height="15" fill="#101010"/><rect x="225" y="65" width="15" height="15" fill="#000000"/><rect x="241" y="65" width="15" height="15" fill="#000000"/><rect x="1" y="81" width="15" height="15" fill="#000000"/><rect x="17" y="81" width="15" height="15" fill="#000000"/><rect x="33" y="81" width="15" height="15" fill="#101010"/><rect x="49" y="81" width="15" height="15" fill="#303030"/><rect x="65" y="81" width="15" height="15" fill="#606060"/><rect x="81" y="81" width="15" height="15" fill="#808080"/><rect x="97" y="81" width="15" height="15" fill="#808080"/><rect x="113" y="81" width="15" height="15" fill="#a0a0a0"/><rect x="129" y="81" width="15" height="15" fill="#b0b0b0"/><rect x="145" y="81" width="15" height="15" fill="#505050"/><rect x="161" y="81" width="15" height="15" fill="#707070"/><rect x="177" y="81" width="15" height="15" fill="#808080"/><rect x="193" y="81" width="15" height="15" fill="#606060"/><rect x="209" y="81" width="15" height="15" fill="#101010"/><rect x="225" y="81" width="15" height="15" fill="#000000"/><rect x="241" y="81" width="15" height="15" fill="#000000"/><rect x="1" y="97" width="15" height="15" fill="#000000"/><rect x="17" y="97" width="15" height="15" fill="#000000"/><rect x="33" y="97" width="15" height="15" fill="#202020"/><rect x="49" y="97" width="15" height="15" fill="#404040"/><rect x="65" y="97" width="15" height="15" fill="#606060"/><rect x="81" y="97" width="15" height="15" fill="#808080"/><rect x="97" y="97" width="15" height="15" fill="#808080"/><rect x="113" y="97" width="15" height="15" fill="#a0a0a0"/><rect x="129" y="97" width="15" height="15" fill="#b0b0b0"/><rect x="145" y="97" width="15" height="15" fill="#808080"/><rect x="161" y="97" width="15" height="15" fill="#505050"/><rect x="177" y="97" width="15" height="15" fill="#606060"/><rect x="193" y="97" width="15" height="15" fill="#505050"/><rect x="209" y="97" width="15" height="15" fill="#101010"/><rect x="225" y="97" width="15" height="15" fill="#101010"/><rect x="241" y="97" width="15" height="15" fill="#000000"/><rect x="1" y="113" width="15" height="15" fill="#000000"/><rect x="17" y="113" width="15" height="15" fill="#000000"/><rect x="33" y="113" width="15" height="15" fill="#101010"/><rect x="49" y="113" width="15" height="15" fill="#505050"/><rect x="65" y="113" width="15" height="15" fill="#808080"/><rect x="81" y="113" width="15" height="15" fill="#707070"/><rect x="97" y="113" width="15" height="15" fill="#707070"/><rect x="113" y="113" width="15" height="15" fill="#b0b0b0"/><rect x="129" y="113" width="15" height="15" fill="#e0e0e0"/><rect x="145" y="113" width="15" height="15" fill="#909090"/><rect x="161" y="113" width="15" height="15" fill="#606060"/><rect x="177" y="113" width="15" height="15" fill="#404040"/><rect x="193" y="113" width="15" height="15" fill="#404040"/><rect x="209" y="113" width="15" height="15" fill="#101010"/><rect x="225" y="113" width="15" height="15" fill="#000000"/><rect x="241" y="113" width="15" height="15" fill="#000000"/><rect x="1" y="129" width="15" height="15" fill="#000000"/><rect x="17" y="129" width="15" height="15" fill="#101010"/><rect x="33" y="129" width="15" height="15" fill="#101010"/><rect x="49" y="129" width="15" height="15" fill="#505050"/><rect x="65" y="129" width="15" height="15" fill="#606060"/><rect x="81" y="129" width="15" height="15" fill="#808080"/><rect x="97" y="129" width="15" height="15" fill="#a0a0a0"/><rect x="113" y="129" width="15" height="15" fill="#d0d0d0"/><rect x="129" y="129" width="15" height="15" fill="#ffffff"/><rect x="145" y="129" width="15" height="15" fill="#e0e0e0"/><rect x="161" y="129" width="15" height="15" fill="#808080"/><rect x="177" y="129" width="15" height="15" fill="#505050"/><rect x="193" y="129" width="15" height="15" fill="#404040"/><rect x="209" y="129" width="15" height="15" fill="#101010"/><rect x="225" y="129" width="15" height="15" fill="#000000"/><rect x="241" y="129" width="15" height="15" fill="#000000"/><rect x="1" y="145" width="15" height="15" fill="#000000"/><rect x="17" y="145" width="15" height="15" fill="#000000"/><rect x="33" y="145" width="15" height="15" fill="#202020"/><rect x="49" y="145" width="15" height="15" fill="#505050"/><rect x="65" y="145" width="15" height="15" fill="#909090"/><rect x="81" y="145" width="15" height="15" fill="#909090"/><rect x="97" y="145" width="15" height="15" fill="#c0c0c0"/><rect x="113" y="145" width="15" height="15" fill="#d0d0d0"/><rect x="129" y="145" width="15" height="15" fill="#e0e0e0"/><rect x="145" y="145" width="15" height="15" fill="#d0d0d0"/><rect x="161" y="145" width="15" height="15" fill="#808080"/><rect x="177" y="145" width="15" height="15" fill="#707070"/><rect x="193" y="145" width="15" height="15" fill="#505050"/><rect x="209" y="145" width="15" height="15" fill="#101010"/><rect x="225" y="145" width="15" height="15" fill="#101010"/><rect x="241" y="145" width="15" height="15" fill="#000000"/><rect x="1" y="161" width="15" height="15" fill="#000000"/><rect x="17" y="161" width="15" height="15" fill="#000000"/><rect x="33" y="161" width="15" height="15" fill="#000000"/><rect x="49" y="161" width="15" height="15" fill="#606060"/><rect x="65" y="161" width="15" height="15" fill="#b0b0b0"/><rect x="81" y="161" width="15" height="15" fill="#909090"/><rect x="97" y="161" width="15" height="15" fill="#c0c0c0"/><rect x="113" y="161" width="15" height="15" fill="#f0f0f0"/><rect x="129" y="161" width="15" height="15" fill="#ffffff"/><rect x="145" y="161" width="15" height="15" fill="#d0d0d0"/><rect x="161" y="161" width="15" height="15" fill="#909090"/><rect x="177" y="161" width="15" height="15" fill="#b0b0b0"/><rect x="193" y="161" width="15" height="15" fill="#909090"/><rect x="209" y="161" width="15" height="15" fill="#202020"/><rect x="225" y="161" width="15" height="15" fill="#101010"/><rect x="241" y="161" width="15" height="15" fill="#000000"/><rect x="1" y="177" width="15" height="15" fill="#000000"/><rect x="17" y="177" width="15" height="15" fill="#000000"/><rect x="33" y="177" width="15" height="15" fill="#000000"/><rect x="49" y="177" width="15" height="15" fill="#505050"/><rect x="65" y="177" width="15" height="15" fill="#808080"/><rect x="81" y="177" width="15" height="15" fill="#909090"/><rect x="97" y="177" width="15" height="15" fill="#b0b0b0"/><rect x="113" y="177" width="15" height="15" fill="#d0d0d0"/><rect x="129" y="177" width="15" height="15" fill="#c0c0c0"/><rect x="145" y="177" width="15" height="15" fill="#808080"/><rect x="161" y="177" width="15" height="15" fill="#606060"/><rect x="177" y="177" width="15" height="15" fill="#808080"/><rect x="193" y="177" width="15" height="15" fill="#606060"/><rect x="209" y="177" width="15" height="15" fill="#101010"/><rect x="225" y="177" width="15" height="15" fill="#101010"/><rect x="241" y="177" width="15" height="15" fill="#000000"/><rect x="1" y="193" width="15" height="15" fill="#101010"/><rect x="17" y="193" width="15" height="15" fill="#000000"/><rect x="33" y="193" width="15" height="15" fill="#101010"/><rect x="49" y="193" width="15" height="15" fill="#202020"/><rect x="65" y="193" width="15" height="15" fill="#404040"/><rect x="81" y="193" width="15" height="15" fill="#404040"/><rect x="97" y="193" width="15" height="15" fill="#202020"/><rect x="113" y="193" width="15" height="15" fill="#202020"/><rect x="129" y="193" width="15" height="15" fill="#303030"/><rect x="145" y="193" width="15" height="15" fill="#202020"/><rect x="161" y="193" width="15" height="15" fill="#202020"/><rect x="177" y="193" width="15" height="15" fill="#404040"/><rect x="193" y="193" width="15" height="15" fill="#303030"/><rect x="209" y="193" width="15" height="15" fill="#000000"/><rect x="225" y="193" width="15" height="15" fill="#000000"/><rect x="241" y="193" width="15" height="15" fill="#000000"/><rect x="1" y="209" width="15" height="15" fill="#000000"/><rect x="17" y="209" width="15" height="15" fill="#000000"/><rect x="33" y="209" width="15" height="15" fill="#202020"/><rect x="49" y="209" width="15" height="15" fill="#000000"/><rect x="65" y="209" width="15" height="15" fill="#000000"/><rect x="81" y="209" width="15" height="15" fill="#000000"/><rect x="97" y="209" width="15" height="15" fill="#000000"/><rect x="113" y="209" width="15" height="15" fill="#000000"/><rect x="129" y="209" width="15" height="15" fill="#000000"/><rect x="145" y="209" width="15" height="15" fill="#000000"/><rect x="161" y="209" width="15" height="15" fill="#000000"/><rect x="177" y="209" width="15" height="15" fill="#000000"/><rect x="193" y="209" width="15" height="15" fill="#000000"/><rect x="209" y="209" width="15" height="15" fill="#000000"/><rect x="225" y="209" width="15" height="15" fill="#000000"/><rect x="241" y="209" width="15" height="15" fill="#000000"/><rect x="1" y="225" width="15" height="15" fill="#000000"/><rect x="17" y="225" width="15" height="15" fill="#000000"/><rect x="33" y="225" width="15" height="15" fill="#101010"/><rect x="49" y="225" width="15" height="15" fill="#000000"/><rect x="65" y="225" width="15" height="15" fill="#000000"/><rect x="81" y="225" width="15" height="15" fill="#101010"/><rect x="97" y="225" width="15" height="15" fill="#101010"/><rect x="113" y="225" width="15" height="15" fill="#101010"/><rect x="129" y="225" width="15" height="15" fill="#303030"/><rect x="145" y="225" width="15" height="15" fill="#101010"/><rect x="161" y="225" width="15" height="15" fill="#000000"/><rect x="177" y="225" width="15" height="15" fill="#000000"/><rect x="193" y="225" width="15" height="15" fill="#101010"/><rect x="209" y="225" width="15" height="15" fill="#000000"/><rect x="225" y="225" width="15" height="15" fill="#000000"/><rect x="241" y="225" width="15" height="15" fill="#000000"/><rect x="1" y="241" width="15" height="15" fill="#000000"/><rect x="17" y="241" width="15" height="15" fill="#101010"/><rect x="33" y="241" width="15" height="15" fill="#000000"/><rect x="49" y="241" width="15" height="15" fill="#000000"/><rect x="65" y="241" width="15" height="15" fill="#000000"/><rect x="81" y="241" width="15" height="15" fill="#101010"/><rect x="97" y="241" width="15" height="15" fill="#101010"/><rect x="113" y="241" width="15" height="15" fill="#000000"/><rect x="129" y="241" width="15" height="15" fill="#000000"/><rect x="145" y="241" width="15" height="15" fill="#000000"/><rect x="161" y="241" width="15" height="15" fill="#000000"/><rect x="177" y="241" width="15" height="15" fill="#000000"/><rect x="193" y="241" width="15" height="15" fill="#303030"/><rect x="209" y="241" width="15" height="15" fill="#000000"/><rect x="225" y="241" width="15" height="15" fill="#606060"/><rect x="241" y="241" width="15" height="15" fill="#202020"/></svg><div class="abs mt" style="left:558px;top:890px;white-space:pre;word-spacing:.6px">X=   9, Y=  10</div>
<div class="abs win" style="left:816px;top:603px;width:272px;height:318px;border-radius:8px 8px 0 0"></div><div class="abs tbar" style="left:817px;top:604px;width:270px;height:23px;border-radius:7px 7px 0 0"></div><div class="abs" style="left:821px;top:627px;width:262px;height:289px;background:#c0c0c0"></div><div class="abs wicon" style="left:823px;top:609px"></div><div class="abs ttl" style="left:817px;top:604px;width:271px;height:23px;line-height:23px;text-align:center;word-spacing:-.7px">20)&nbsp;&nbsp; Cr+PCr</div><div class="abs wbtn" style="left:1065px;top:606px"><svg width="18" height="18"><path d="M6.200 6.200l5.600 5.600M11.800 6.200l-5.600 5.600" stroke="#000" stroke-width="2.400" stroke-linecap="round"/></svg></div><svg class="abs " style="left:824px;top:629px" width="257" height="257" viewBox="0 0 257 257" shape-rendering="crispEdges"><rect width="257" height="257" fill="#737373"/><rect x="1" y="1" width="15" height="15" fill="#000000"/><rect x="17" y="1" width="15" height="15" fill="#000000"/><rect x="33" y="1" width="15" height="15" fill="#000000"/><rect x="49" y="1" width="15" height="15" fill="#000000"/><rect x="65" y="1" width="15" height="15" fill="#000000"/><rect x="81" y="1" width="15" height="15" fill="#000000"/><rect x="97" y="1" width="15" height="15" fill="#000000"/><rect x="113" y="1" width="15" height="15" fill="#101010"/><rect x="129" y="1" width="15" height="15" fill="#202020"/><rect x="145" y="1" width="15" height="15" fill="#000000"/><rect x="161" y="1" width="15" height="15" fill="#000000"/><rect x="177" y="1" width="15" height="15" fill="#000000"/><rect x="193" y="1" width="15" height="15" fill="#000000"/><rect x="209" y="1" width="15" height="15" fill="#101010"/><rect x="225" y="1" width="15" height="15" fill="#000000"/><rect x="241" y="1" width="15" height="15" fill="#000000"/><rect x="1" y="17" width="15" height="15" fill="#000000"/><rect x="17" y="17" width="15" height="15" fill="#000000"/><rect x="33" y="17" width="15" height="15" fill="#000000"/><rect x="49" y="17" width="15" height="15" fill="#101010"/><rect x="65" y="17" width="15" height="15" fill="#303030"/><rect x="81" y="17" width="15" height="15" fill="#404040"/><rect x="97" y="17" width="15" height="15" fill="#000000"/><rect x="113" y="17" width="15" height="15" fill="#101010"/><rect x="129" y="17" width="15" height="15" fill="#303030"/><rect x="145" y="17" width="15" height="15" fill="#000000"/><rect x="161" y="17" width="15" height="15" fill="#202020"/><rect x="177" y="17" width="15" height="15" fill="#000000"/><rect x="193" y="17" width="15" height="15" fill="#101010"/><rect x="209" y="17" width="15" height="15" fill="#000000"/><rect x="225" y="17" width="15" height="15" fill="#000000"/><rect x="241" y="17" width="15" height="15" fill="#000000"/><rect x="1" y="33" width="15" height="15" fill="#000000"/><rect x="17" y="33" width="15" height="15" fill="#000000"/><rect x="33" y="33" width="15" height="15" fill="#000000"/><rect x="49" y="33" width="15" height="15" fill="#101010"/><rect x="65" y="33" width="15" height="15" fill="#202020"/><rect x="81" y="33" width="15" height="15" fill="#202020"/><rect x="97" y="33" width="15" height="15" fill="#101010"/><rect x="113" y="33" width="15" height="15" fill="#303030"/><rect x="129" y="33" width="15" height="15" fill="#404040"/><rect x="145" y="33" width="15" height="15" fill="#303030"/><rect x="161" y="33" width="15" height="15" fill="#101010"/><rect x="177" y="33" width="15" height="15" fill="#202020"/><rect x="193" y="33" width="15" height="15" fill="#101010"/><rect x="209" y="33" width="15" height="15" fill="#000000"/><rect x="225" y="33" width="15" height="15" fill="#000000"/><rect x="241" y="33" width="15" height="15" fill="#000000"/><rect x="1" y="49" width="15" height="15" fill="#000000"/><rect x="17" y="49" width="15" height="15" fill="#000000"/><rect x="33" y="49" width="15" height="15" fill="#000000"/><rect x="49" y="49" width="15" height="15" fill="#202020"/><rect x="65" y="49" width="15" height="15" fill="#606060"/><rect x="81" y="49" width="15" height="15" fill="#606060"/><rect x="97" y="49" width="15" height="15" fill="#606060"/><rect x="113" y="49" width="15" height="15" fill="#808080"/><rect x="129" y="49" width="15" height="15" fill="#909090"/><rect x="145" y="49" width="15" height="15" fill="#808080"/><rect x="161" y="49" width="15" height="15" fill="#606060"/><rect x="177" y="49" width="15" height="15" fill="#707070"/><rect x="193" y="49" width="15" height="15" fill="#404040"/><rect x="209" y="49" width="15" height="15" fill="#101010"/><rect x="225" y="49" width="15" height="15" fill="#000000"/><rect x="241" y="49" width="15" height="15" fill="#000000"/><rect x="1" y="65" width="15" height="15" fill="#000000"/><rect x="17" y="65" width="15" height="15" fill="#000000"/><rect x="33" y="65" width="15" height="15" fill="#101010"/><rect x="49" y="65" width="15" height="15" fill="#303030"/><rect x="65" y="65" width="15" height="15" fill="#707070"/><rect x="81" y="65" width="15" height="15" fill="#707070"/><rect x="97" y="65" width="15" height="15" fill="#909090"/><rect x="113" y="65" width="15" height="15" fill="#c0c0c0"/><rect x="129" y="65" width="15" height="15" fill="#d0d0d0"/><rect x="145" y="65" width="15" height="15" fill="#b0b0b0"/><rect x="161" y="65" width="15" height="15" fill="#909090"/><rect x="177" y="65" width="15" height="15" fill="#909090"/><rect x="193" y="65" width="15" height="15" fill="#606060"/><rect x="209" y="65" width="15" height="15" fill="#101010"/><rect x="225" y="65" width="15" height="15" fill="#101010"/><rect x="241" y="65" width="15" height="15" fill="#000000"/><rect x="1" y="81" width="15" height="15" fill="#000000"/><rect x="17" y="81" width="15" height="15" fill="#000000"/><rect x="33" y="81" width="15" height="15" fill="#101010"/><rect x="49" y="81" width="15" height="15" fill="#303030"/><rect x="65" y="81" width="15" height="15" fill="#707070"/><rect x="81" y="81" width="15" height="15" fill="#909090"/><rect x="97" y="81" width="15" height="15" fill="#808080"/><rect x="113" y="81" width="15" height="15" fill="#a0a0a0"/><rect x="129" y="81" width="15" height="15" fill="#c0c0c0"/><rect x="145" y="81" width="15" height="15" fill="#505050"/><rect x="161" y="81" width="15" height="15" fill="#808080"/><rect x="177" y="81" width="15" height="15" fill="#808080"/><rect x="193" y="81" width="15" height="15" fill="#707070"/><rect x="209" y="81" width="15" height="15" fill="#101010"/><rect x="225" y="81" width="15" height="15" fill="#101010"/><rect x="241" y="81" width="15" height="15" fill="#000000"/><rect x="1" y="97" width="15" height="15" fill="#000000"/><rect x="17" y="97" width="15" height="15" fill="#101010"/><rect x="33" y="97" width="15" height="15" fill="#101010"/><rect x="49" y="97" width="15" height="15" fill="#303030"/><rect x="65" y="97" width="15" height="15" fill="#808080"/><rect x="81" y="97" width="15" height="15" fill="#a0a0a0"/><rect x="97" y="97" width="15" height="15" fill="#808080"/><rect x="113" y="97" width="15" height="15" fill="#a0a0a0"/><rect x="129" y="97" width="15" height="15" fill="#d0d0d0"/><rect x="145" y="97" width="15" height="15" fill="#b0b0b0"/><rect x="161" y="97" width="15" height="15" fill="#808080"/><rect x="177" y="97" width="15" height="15" fill="#808080"/><rect x="193" y="97" width="15" height="15" fill="#606060"/><rect x="209" y="97" width="15" height="15" fill="#101010"/><rect x="225" y="97" width="15" height="15" fill="#101010"/><rect x="241" y="97" width="15" height="15" fill="#000000"/><rect x="1" y="113" width="15" height="15" fill="#000000"/><rect x="17" y="113" width="15" height="15" fill="#101010"/><rect x="33" y="113" width="15" height="15" fill="#101010"/><rect x="49" y="113" width="15" height="15" fill="#303030"/><rect x="65" y="113" width="15" height="15" fill="#808080"/><rect x="81" y="113" width="15" height="15" fill="#a0a0a0"/><rect x="97" y="113" width="15" height="15" fill="#a0a0a0"/><rect x="113" y="113" width="15" height="15" fill="#c0c0c0"/><rect x="129" y="113" width="15" height="15" fill="#e0e0e0"/><rect x="145" y="113" width="15" height="15" fill="#c0c0c0"/><rect x="161" y="113" width="15" height="15" fill="#a0a0a0"/><rect x="177" y="113" width="15" height="15" fill="#a0a0a0"/><rect x="193" y="113" width="15" height="15" fill="#707070"/><rect x="209" y="113" width="15" height="15" fill="#101010"/><rect x="225" y="113" width="15" height="15" fill="#101010"/><rect x="241" y="113" width="15" height="15" fill="#000000"/><rect x="1" y="129" width="15" height="15" fill="#000000"/><rect x="17" y="129" width="15" height="15" fill="#101010"/><rect x="33" y="129" width="15" height="15" fill="#101010"/><rect x="49" y="129" width="15" height="15" fill="#303030"/><rect x="65" y="129" width="15" height="15" fill="#808080"/><rect x="81" y="129" width="15" height="15" fill="#a0a0a0"/><rect x="97" y="129" width="15" height="15" fill="#d0d0d0"/><rect x="113" y="129" width="15" height="15" fill="#e0e0e0"/><rect x="129" y="129" width="15" height="15" fill="#e0e0e0"/><rect x="145" y="129" width="15" height="15" fill="#d0d0d0"/><rect x="161" y="129" width="15" height="15" fill="#a0a0a0"/><rect x="177" y="129" width="15" height="15" fill="#909090"/><rect x="193" y="129" width="15" height="15" fill="#707070"/><rect x="209" y="129" width="15" height="15" fill="#202020"/><rect x="225" y="129" width="15" height="15" fill="#101010"/><rect x="241" y="129" width="15" height="15" fill="#000000"/><rect x="1" y="145" width="15" height="15" fill="#000000"/><rect x="17" y="145" width="15" height="15" fill="#101010"/><rect x="33" y="145" width="15" height="15" fill="#101010"/><rect x="49" y="145" width="15" height="15" fill="#404040"/><rect x="65" y="145" width="15" height="15" fill="#909090"/><rect x="81" y="145" width="15" height="15" fill="#c0c0c0"/><rect x="97" y="145" width="15" height="15" fill="#f0f0f0"/><rect x="113" y="145" width="15" height="15" fill="#e0e0e0"/><rect x="129" y="145" width="15" height="15" fill="#e0e0e0"/><rect x="145" y="145" width="15" height="15" fill="#f0f0f0"/><rect x="161" y="145" width="15" height="15" fill="#b0b0b0"/><rect x="177" y="145" width="15" height="15" fill="#a0a0a0"/><rect x="193" y="145" width="15" height="15" fill="#808080"/><rect x="209" y="145" width="15" height="15" fill="#303030"/><rect x="225" y="145" width="15" height="15" fill="#101010"/><rect x="241" y="145" width="15" height="15" fill="#000000"/><rect x="1" y="161" width="15" height="15" fill="#000000"/><rect x="17" y="161" width="15" height="15" fill="#101010"/><rect x="33" y="161" width="15" height="15" fill="#101010"/><rect x="49" y="161" width="15" height="15" fill="#505050"/><rect x="65" y="161" width="15" height="15" fill="#a0a0a0"/><rect x="81" y="161" width="15" height="15" fill="#d0d0d0"/><rect x="97" y="161" width="15" height="15" fill="#f0f0f0"/><rect x="113" y="161" width="15" height="15" fill="#ffffff"/><rect x="129" y="161" width="15" height="15" fill="#ffffff"/><rect x="145" y="161" width="15" height="15" fill="#ffffff"/><rect x="161" y="161" width="15" height="15" fill="#d0d0d0"/><rect x="177" y="161" width="15" height="15" fill="#d0d0d0"/><rect x="193" y="161" width="15" height="15" fill="#a0a0a0"/><rect x="209" y="161" width="15" height="15" fill="#303030"/><rect x="225" y="161" width="15" height="15" fill="#202020"/><rect x="241" y="161" width="15" height="15" fill="#000000"/><rect x="1" y="177" width="15" height="15" fill="#000000"/><rect x="17" y="177" width="15" height="15" fill="#000000"/><rect x="33" y="177" width="15" height="15" fill="#202020"/><rect x="49" y="177" width="15" height="15" fill="#303030"/><rect x="65" y="177" width="15" height="15" fill="#707070"/><rect x="81" y="177" width="15" height="15" fill="#909090"/><rect x="97" y="177" width="15" height="15" fill="#a0a0a0"/><rect x="113" y="177" width="15" height="15" fill="#b0b0b0"/><rect x="129" y="177" width="15" height="15" fill="#b0b0b0"/><rect x="145" y="177" width="15" height="15" fill="#b0b0b0"/><rect x="161" y="177" width="15" height="15" fill="#909090"/><rect x="177" y="177" width="15" height="15" fill="#a0a0a0"/><rect x="193" y="177" width="15" height="15" fill="#707070"/><rect x="209" y="177" width="15" height="15" fill="#303030"/><rect x="225" y="177" width="15" height="15" fill="#101010"/><rect x="241" y="177" width="15" height="15" fill="#000000"/><rect x="1" y="193" width="15" height="15" fill="#000000"/><rect x="17" y="193" width="15" height="15" fill="#000000"/><rect x="33" y="193" width="15" height="15" fill="#000000"/><rect x="49" y="193" width="15" height="15" fill="#101010"/><rect x="65" y="193" width="15" height="15" fill="#303030"/><rect x="81" y="193" width="15" height="15" fill="#303030"/><rect x="97" y="193" width="15" height="15" fill="#202020"/><rect x="113" y="193" width="15" height="15" fill="#303030"/><rect x="129" y="193" width="15" height="15" fill="#303030"/><rect x="145" y="193" width="15" height="15" fill="#303030"/><rect x="161" y="193" width="15" height="15" fill="#303030"/><rect x="177" y="193" width="15" height="15" fill="#404040"/><rect x="193" y="193" width="15" height="15" fill="#303030"/><rect x="209" y="193" width="15" height="15" fill="#101010"/><rect x="225" y="193" width="15" height="15" fill="#000000"/><rect x="241" y="193" width="15" height="15" fill="#000000"/><rect x="1" y="209" width="15" height="15" fill="#000000"/><rect x="17" y="209" width="15" height="15" fill="#000000"/><rect x="33" y="209" width="15" height="15" fill="#000000"/><rect x="49" y="209" width="15" height="15" fill="#000000"/><rect x="65" y="209" width="15" height="15" fill="#101010"/><rect x="81" y="209" width="15" height="15" fill="#101010"/><rect x="97" y="209" width="15" height="15" fill="#101010"/><rect x="113" y="209" width="15" height="15" fill="#101010"/><rect x="129" y="209" width="15" height="15" fill="#202020"/><rect x="145" y="209" width="15" height="15" fill="#101010"/><rect x="161" y="209" width="15" height="15" fill="#101010"/><rect x="177" y="209" width="15" height="15" fill="#101010"/><rect x="193" y="209" width="15" height="15" fill="#101010"/><rect x="209" y="209" width="15" height="15" fill="#101010"/><rect x="225" y="209" width="15" height="15" fill="#000000"/><rect x="241" y="209" width="15" height="15" fill="#000000"/><rect x="1" y="225" width="15" height="15" fill="#000000"/><rect x="17" y="225" width="15" height="15" fill="#000000"/><rect x="33" y="225" width="15" height="15" fill="#000000"/><rect x="49" y="225" width="15" height="15" fill="#101010"/><rect x="65" y="225" width="15" height="15" fill="#303030"/><rect x="81" y="225" width="15" height="15" fill="#000000"/><rect x="97" y="225" width="15" height="15" fill="#101010"/><rect x="113" y="225" width="15" height="15" fill="#101010"/><rect x="129" y="225" width="15" height="15" fill="#000000"/><rect x="145" y="225" width="15" height="15" fill="#101010"/><rect x="161" y="225" width="15" height="15" fill="#000000"/><rect x="177" y="225" width="15" height="15" fill="#101010"/><rect x="193" y="225" width="15" height="15" fill="#101010"/><rect x="209" y="225" width="15" height="15" fill="#000000"/><rect x="225" y="225" width="15" height="15" fill="#000000"/><rect x="241" y="225" width="15" height="15" fill="#000000"/><rect x="1" y="241" width="15" height="15" fill="#000000"/><rect x="17" y="241" width="15" height="15" fill="#000000"/><rect x="33" y="241" width="15" height="15" fill="#000000"/><rect x="49" y="241" width="15" height="15" fill="#000000"/><rect x="65" y="241" width="15" height="15" fill="#101010"/><rect x="81" y="241" width="15" height="15" fill="#000000"/><rect x="97" y="241" width="15" height="15" fill="#000000"/><rect x="113" y="241" width="15" height="15" fill="#000000"/><rect x="129" y="241" width="15" height="15" fill="#000000"/><rect x="145" y="241" width="15" height="15" fill="#000000"/><rect x="161" y="241" width="15" height="15" fill="#000000"/><rect x="177" y="241" width="15" height="15" fill="#000000"/><rect x="193" y="241" width="15" height="15" fill="#000000"/><rect x="209" y="241" width="15" height="15" fill="#000000"/><rect x="225" y="241" width="15" height="15" fill="#000000"/><rect x="241" y="241" width="15" height="15" fill="#101010"/></svg><div class="abs mt" style="left:830px;top:890px;white-space:pre;word-spacing:.6px">X=   9, Y=  10</div>
<div class="abs" style="left:0;top:0;width:1306px;height:25px;background:linear-gradient(#efebe5 0,#efebe5 88%,#cfc9be 100%)"></div>
<svg class="abs" style="left:0;top:0" width="1306" height="25" viewBox="0 0 1306 25">
<!-- distro logo -->
<g><rect x="10.600" y="5.500" width="5.600" height="5.400" fill="#8fd12c"/><rect x="18" y="5.500" width="5.600" height="5.400" fill="#9c1f8c"/><rect x="10.600" y="13" width="5.600" height="5.400" fill="#2a2f96"/><rect x="18" y="13" width="5.600" height="5.400" fill="#f5a31b"/>
<path d="M17 3l2 2.500h-4z" fill="#f5a31b"/><path d="M25.500 12l-2.500 2v-4z" fill="#2a2f96"/><path d="M17 20.500l-2-2.500h4z" fill="#8fd12c"/><path d="M8.500 12l2.500-2v4z" fill="#9c1f8c"/>
<path d="M17 6v12M11 12h12" stroke="#efe8f2" stroke-width="1.200"/><path d="M12 7l10 10M22 7l-10 10" stroke="#fff" stroke-opacity=".45" stroke-width="1"/></g>
<!-- web browser -->
<g><circle cx="260.500" cy="11" r="8.500" fill="#1257c9" stroke="#08204f" stroke-width="1"/><path d="M254 7q4-4 9-1q1 4-3 5q-5 1-6-4z" fill="#7fd68a"/><path d="M253 14q3 1 5 4l-3 1q-3-2-2-5z" fill="#5cc46c"/>
<path d="M251.500 8q1 5 9 4.500q7-0.500 9.500-2.500" fill="none" stroke="#3b3b3b" stroke-width="1.600"/><path d="M251.500 8q1 5 9 4.500q7-0.500 9.500-2.500" fill="none" stroke="#c9c9c9" stroke-width=".6"/>
<ellipse cx="265" cy="17.500" rx="5.200" ry="3.800" transform="rotate(-28 265 17.500)" fill="#f4f4f8" stroke="#222" stroke-width="1"/><path d="M265 14.500l2 1" stroke="#4455cc" stroke-width="1"/></g>
<!-- mail -->
<g><path d="M274.500 14L279.500 7.300L294 17.600L281.800 20.700Z" fill="#dcb87c" stroke="#2b2415" stroke-width="1"/><path d="M274.500 14L284 15.500L294 17.600M284 15.500L281.800 20.700" stroke="#b99253" stroke-width=".8" fill="none"/>
<path d="M279 6.500L288.500 3.500L294.500 10.500L285 13Z" fill="#f6f6f6" stroke="#555" stroke-width=".8"/><path d="M281.500 7L288 5L292 9.800L285.500 11.500Z" fill="#3f7fd0"/><circle cx="287" cy="8.500" r="2" fill="#8fd8a0"/></g>
<!-- writer -->
<g><path d="M300 6L313 3L319 14.500L307 18Z" fill="#fdfdfd" stroke="#222" stroke-width="1"/><path d="M298.600 9.500L311 6.500L318.500 16L306.300 19Z" fill="#f4f4f4" stroke="#222" stroke-width="1"/><path d="M303 11l8-2M304 13l9-2.200" stroke="#9a9a9a" stroke-width="1.200"/><path d="M310 15.500l4-1" stroke="#3c78e0" stroke-width="1.200"/>
<path d="M299.400 14.500L317.700 21.800" stroke="#1a1a1a" stroke-width="3.200" stroke-linecap="round"/><path d="M300 14.700L305 16.700" stroke="#e8b21a" stroke-width="2" stroke-linecap="round"/><path d="M306 17.100L317 21.500" stroke="#b9c4e6" stroke-width="1.800" stroke-linecap="round"/></g>
<!-- impress -->
<g><rect x="325.800" y="3.400" width="15" height="12" fill="#8d93c9" stroke="#111" stroke-width="1.200"/><rect x="328.500" y="7" width="3" height="7" fill="#f0682e"/><rect x="332.500" y="5" width="3" height="9" fill="#3fbf5f"/><rect x="336.500" y="9" width="3" height="5" fill="#2f7de0"/>
<path d="M322.300 14.500L334.600 11.100L341.500 18L329.200 22.200Z" fill="#f2f2f2" stroke="#111" stroke-width="1.200"/><path d="M326.500 15L334 13L338.500 17.500L330.500 19.800Z" fill="#2f8cf0"/></g>
<!-- chart -->
<g><path d="M437 6.300L451.400 1.900L459 10.300L453.300 11.500L441 10Z" fill="#e6e6e6" stroke="#111" stroke-width="1.200" stroke-linejoin="round"/><path d="M441 7.500l9-2.800" stroke="#b6d3ea" stroke-width="1.200"/>
<ellipse cx="445.900" cy="14.900" rx="7.700" ry="5.800" fill="#8d8fc8" stroke="#111" stroke-width="1.200"/><path d="M445.900 14.900L446.300 9.200A7.700 5.800 0 0 0 438.200 15.200A7.700 5.800 0 0 0 440.500 19Z" fill="#3c95f5"/><path d="M445.900 14.900L446.300 9.200A7.700 5.800 0 0 1 452.300 11.800Z" fill="#f4693a"/><path d="M445.900 14.900L452.300 11.800A7.700 5.800 0 0 1 453.500 14.600Z" fill="#4fcf72"/></g>
<!-- volume -->
<g><path d="M1202 11.500L1211.300 3.600Q1214.500 11.500 1211.300 19.500Z" fill="#9c9c9c" stroke="#2a2a2a" stroke-width="1"/><path d="M1205 11.500L1210.500 6.500Q1212 11.500 1210.500 16.500Z" fill="#d4d4d4"/>
<path d="M1215 7.500Q1217.500 11.500 1215 15.500M1217.500 5Q1221 11.500 1217.500 18M1219.800 3Q1224.500 11.500 1219.800 20" fill="none" stroke="#1e4b94" stroke-width="1.300"/></g>
<!-- handle + small icon -->
<path d="M1270.500 0.500h5M1270.500 2.500h5M1270.500 4.500h5M1270.500 6.500h5M1270.500 8.500h5M1270.500 10.500h5M1270.500 12.500h5M1270.500 14.500h5M1270.500 16.500h5M1270.500 18.500h5M1270.500 20.500h5M1270.500 22.500h5" stroke="#b3a58c" stroke-width="1" shape-rendering="crispEdges"/>
<rect x="1285.500" y="7.500" width="11.500" height="9" fill="#cfccc6" stroke="#aeaaa2" stroke-width="1"/><path d="M1287 10.500h8.500M1287 13.500h8.500" stroke="#b9b5ad" stroke-width="1.200"/>
</svg>
<div class="abs ptxt" style="left:33px;top:0;line-height:24px">アプリケーション</div>
<div class="abs ptxt" style="left:150px;top:0;line-height:24px">場所</div>
<div class="abs ptxt" style="left:190px;top:0;line-height:24px">システム</div>
<div class="abs" style="left:1229px;top:0;line-height:24px;font-family:'Noto Sans CJK JP',sans-serif;font-size:13px;letter-spacing:.5px;color:#000">11:34</div>
<div class="abs" style="left:0;top:921px;width:1306px;height:25px;background:#efebe5"></div>
<div class="abs task" style="left:2px;width:21px"><svg width="19" height="19" style="position:absolute;left:0;top:0"><path d="M3 11l8-6l5 3l-8 6z" fill="#3a3a3a" stroke="#222" stroke-width="1"/><path d="M5 10.500l6-4.500l3.500 2l-6 4.500z" fill="#3f8ad8"/><path d="M7 9l3-2l2 1.200l-3 2z" fill="#7fd07a"/><path d="M3 13l5 3l8-6" fill="none" stroke="#8a8a8a" stroke-width="1.400"/><path d="M9 4l2 1.500" stroke="#e6c15a" stroke-width="1.500"/></svg></div>
<svg class="abs" style="left:26px;top:921px" width="8" height="25"><path d="M1 1.500h5M1 3.500h5M1 5.500h5M1 7.500h5M1 9.500h5M1 11.500h5M1 13.500h5M1 15.500h5M1 17.500h5M1 19.500h5M1 21.500h5M1 23.500h5" stroke="#c3b8a4" stroke-width="1" shape-rendering="crispEdges"/></svg>
<div class="abs task" style="left:35px;background:#ddd6cb;border-color:#8f8777;padding-left:29px"><i class="wi"></i>Idl (25)<svg width="9" height="9" style="position:absolute;right:2px;top:2px"><path d="M1 1h1M3 1h1M5 1h1M7 1h1M3 3h1M5 3h1M7 3h1M5 5h1M7 5h1M7 7h1" stroke="#f6f3ee" stroke-width="1.400"/></svg></div>
<div class="abs task" style="left:150px;padding-left:29px"><i class="ti"></i>lcmodel@···</div>
<div class="abs task" style="left:265px;padding-left:29px"><i class="ti"></i>GNOME <span style="font-size:13px">端末</span></div>
<div class="abs task" style="left:380px;padding-left:28px"><i class="wi"></i>IDL 0</div>
<div class="abs" style="left:802px;top:924px;width:111px;height:20px;background:#b1a794"></div>
<div class="abs" style="left:802px;top:924px;width:27px;height:20px;background:#3f6ea6;border:1px solid #5d97d6"></div>
<svg class="abs" style="left:802px;top:924px" width="112" height="20"><rect x="2.500" y="4.500" width="13" height="10" fill="#e9e9e9" stroke="#111" stroke-width="2"/><rect x="19" y="3" width="6" height="2" fill="#8ab8ee"/><rect x="19" y="7" width="6" height="2.500" fill="#8ab8ee"/><rect x="2" y="15" width="3" height="4" fill="#cfe2f7"/><rect x="7" y="15" width="3" height="4" fill="#cfe2f7"/><rect x="12" y="15" width="4" height="4" fill="#cfe2f7"/><rect x="18" y="14" width="3" height="5" fill="#cfe2f7"/>
<rect x="29.500" y="1.500" width="11" height="8" fill="#efebe5" stroke="#111" stroke-width="1.600"/><path d="M28 0v20M56 0v20M84 0v20" stroke="#efebe5" stroke-width="1"/></svg>
<svg class="abs" style="left:916px;top:922px" width="22" height="23"><path d="M3 4l4-1.500l2 1.500h8l1 2v14q-7 2-15 0z" fill="#3f78c8" stroke="#2a5aa0" stroke-width="1"/><path d="M12 2l4 1l1 4l-3-1z" fill="#dfe9f5"/><path d="M3.500 6.500h14" stroke="#7fa9e0" stroke-width="1"/></svg>
</div>
</body></html>
